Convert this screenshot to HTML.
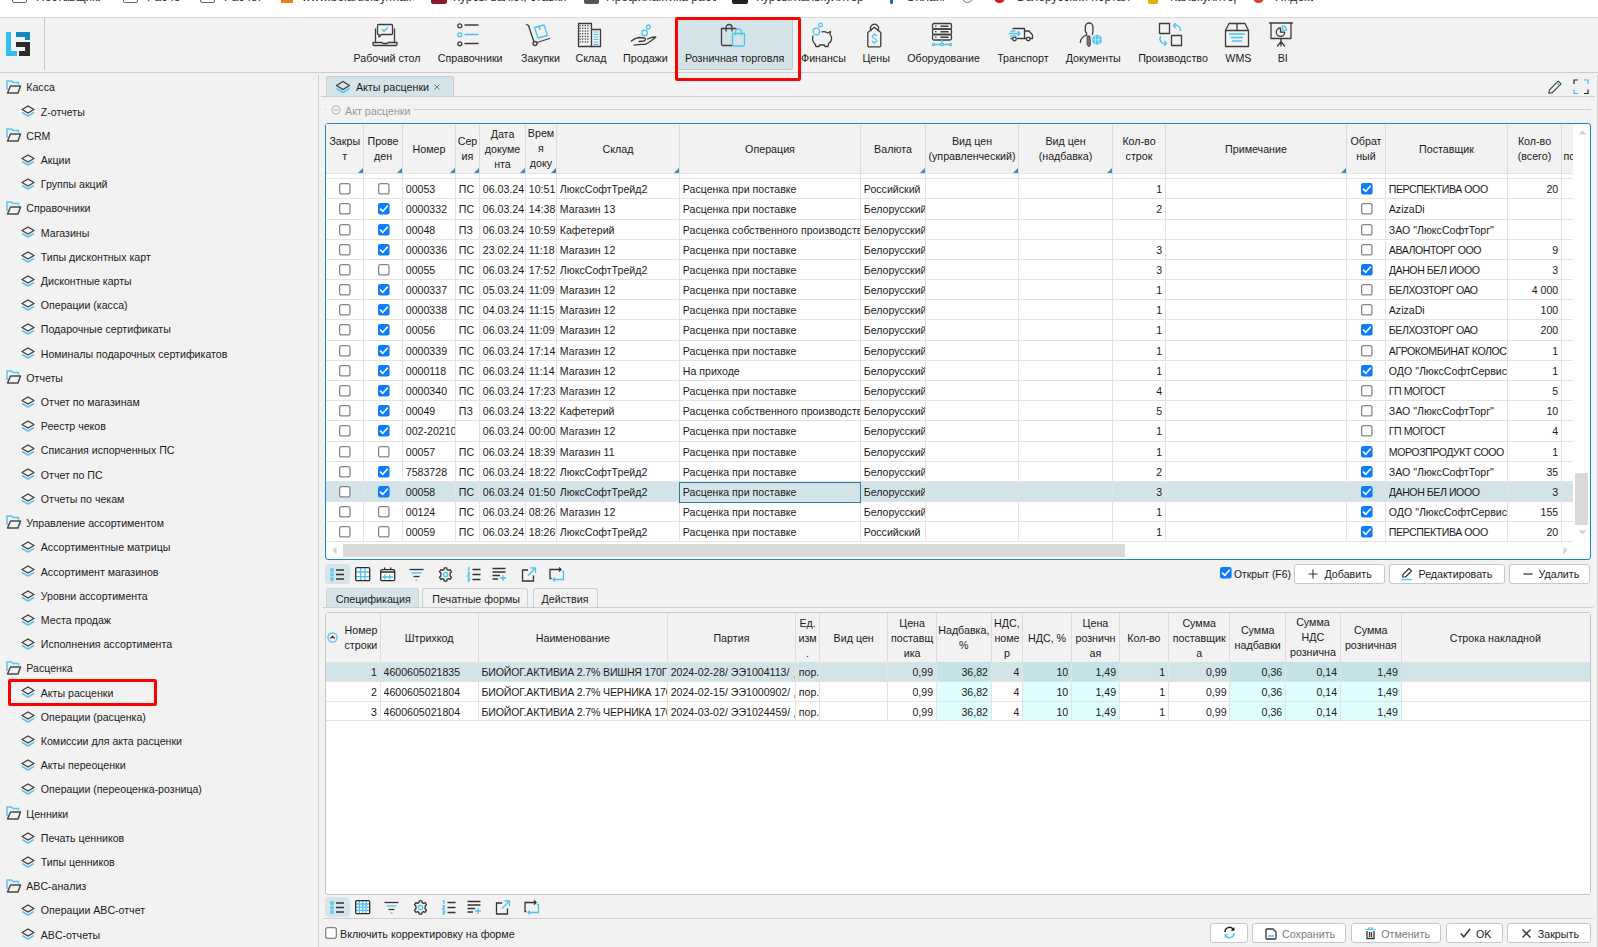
<!DOCTYPE html>
<html><head><meta charset="utf-8"><title>Акты расценки</title>
<style>
html,body{margin:0;padding:0;}
body{width:1598px;height:947px;overflow:hidden;position:relative;background:#f2f2f2;font-family:"Liberation Sans",sans-serif;font-size:10.6px;color:#1b1b1b;}
.t{position:absolute;white-space:nowrap;}
.b{position:absolute;box-sizing:border-box;}
svg.b{overflow:visible;}
</style></head><body>

<div class="b" style="left:0.00px;top:0.00px;width:1598.00px;height:17.00px;background:#ffffff;"></div>
<div class="b" style="left:0.00px;top:17.00px;width:1598.00px;height:1.00px;background:#dcdcdc;"></div>
<div class="b" style="left:0;top:0;width:1598px;height:17px;overflow:hidden;">
<div class="b" style="left:12px;top:-10px;width:15px;height:13px;border:1.5px solid #666;border-radius:2px;"></div>
<div class="t" style="left:36px;top:-10px;width:65px;overflow:hidden;font-size:12px;line-height:14px;color:#333;">Поставщики ЛС</div>
<div class="b" style="left:123px;top:-10px;width:15px;height:13px;border:1.5px solid #666;border-radius:2px;"></div>
<div class="t" style="left:147px;top:-10px;width:34px;overflow:hidden;font-size:12px;line-height:14px;color:#333;">Расчет</div>
<div class="b" style="left:200px;top:-10px;width:15px;height:13px;border:1.5px solid #666;border-radius:2px;"></div>
<div class="t" style="left:224px;top:-10px;width:38px;overflow:hidden;font-size:12px;line-height:14px;color:#333;">Расчеты</div>
<div class="b" style="left:281px;top:0px;width:12px;height:3px;background:#f07b16;"></div>
<div class="t" style="left:302px;top:-10px;width:112px;overflow:hidden;font-size:12px;line-height:14px;color:#333;">www.belarus.by/main</div>
<div class="b" style="left:431px;top:-10px;width:16px;height:14px;background:#8b1a2b;border-radius:2px;"></div>
<div class="t" style="left:453px;top:-10px;width:114px;overflow:hidden;font-size:12px;line-height:14px;color:#333;">Курсы валют, ставки</div>
<div class="b" style="left:584px;top:-10px;width:15px;height:14px;background:#555;border-radius:2px;"></div>
<div class="t" style="left:606px;top:-10px;width:110px;overflow:hidden;font-size:12px;line-height:14px;color:#333;">Профилактика рабо</div>
<div class="b" style="left:732px;top:-10px;width:16px;height:14px;background:#222;border-radius:2px;"></div>
<div class="t" style="left:756px;top:-10px;width:110px;overflow:hidden;font-size:12px;line-height:14px;color:#333;">Курсы/Калькулятор</div>
<div class="b" style="left:890px;top:-10px;width:3px;height:14px;background:#1565c0;border-radius:2px;"></div>
<div class="t" style="left:906px;top:-10px;width:38px;overflow:hidden;font-size:12px;line-height:14px;color:#333;">Онлайн</div>
<div class="b" style="left:962px;top:-8px;width:11px;height:11px;border-radius:50%;border:1.5px solid #777;"></div>
<div class="b" style="left:994px;top:-8px;width:11px;height:11px;border-radius:50%;background:#d81b1b;"></div>
<div class="t" style="left:1017px;top:-10px;width:113px;overflow:hidden;font-size:12px;line-height:14px;color:#333;">Белорусский портал</div>
<div class="b" style="left:1148px;top:-10px;width:10px;height:14px;background:#e0b000;border-radius:2px;"></div>
<div class="t" style="left:1170px;top:-10px;width:66px;overflow:hidden;font-size:12px;line-height:14px;color:#333;">Калькулятор</div>
<div class="b" style="left:1253px;top:-8px;width:11px;height:11px;border-radius:50%;background:#e53935;"></div>
<div class="t" style="left:1275px;top:-10px;width:38px;overflow:hidden;font-size:12px;line-height:14px;color:#333;">Яндекс</div>
</div>
<div class="b" style="left:0.00px;top:72.00px;width:1598.00px;height:1.20px;background:#cdcdcd;"></div>
<div class="b" style="left:44.00px;top:18.00px;width:1.00px;height:52.00px;background:#c9c9c9;"></div>
<svg class="b" style="left:6px;top:32px" width="25" height="24" viewBox="0 0 25 24">
<path d="M0 0H5V19H11V24H0Z" fill="#35bdf0"/>
<path d="M10 0H24V8H19V5H10Z" fill="#118ac0"/>
<path d="M10 10H24V24H13V19H19V15H10Z" fill="#2b2b2b"/>
</svg>
<div class="b" style="left:678.00px;top:20.00px;width:115.00px;height:50.00px;background:#d4e3e8;border-right:1px solid #c4c9cc;border-bottom:1px solid #c4c9cc;border-bottom-right-radius:3px;"></div>
<div class="t" style="left:327.00px;width:120px;text-align:center;top:50.00px;line-height:16px;font-size:10.7px;">Рабочий стол</div>
<div class="t" style="left:410.20px;width:120px;text-align:center;top:50.00px;line-height:16px;font-size:10.7px;">Справочники</div>
<div class="t" style="left:480.50px;width:120px;text-align:center;top:50.00px;line-height:16px;font-size:10.7px;">Закупки</div>
<div class="t" style="left:531.05px;width:120px;text-align:center;top:50.00px;line-height:16px;font-size:10.7px;">Склад</div>
<div class="t" style="left:585.40px;width:120px;text-align:center;top:50.00px;line-height:16px;font-size:10.7px;">Продажи</div>
<div class="t" style="left:674.70px;width:120px;text-align:center;top:50.00px;line-height:16px;font-size:10.7px;">Розничная торговля</div>
<div class="t" style="left:763.45px;width:120px;text-align:center;top:50.00px;line-height:16px;font-size:10.7px;">Финансы</div>
<div class="t" style="left:816.10px;width:120px;text-align:center;top:50.00px;line-height:16px;font-size:10.7px;">Цены</div>
<div class="t" style="left:883.60px;width:120px;text-align:center;top:50.00px;line-height:16px;font-size:10.7px;">Оборудование</div>
<div class="t" style="left:962.85px;width:120px;text-align:center;top:50.00px;line-height:16px;font-size:10.7px;">Транспорт</div>
<div class="t" style="left:1033.25px;width:120px;text-align:center;top:50.00px;line-height:16px;font-size:10.7px;">Документы</div>
<div class="t" style="left:1113.00px;width:120px;text-align:center;top:50.00px;line-height:16px;font-size:10.7px;">Производство</div>
<div class="t" style="left:1178.40px;width:120px;text-align:center;top:50.00px;line-height:16px;font-size:10.7px;">WMS</div>
<div class="t" style="left:1222.80px;width:120px;text-align:center;top:50.00px;line-height:16px;font-size:10.7px;">BI</div>
<svg class="b" style="left:372px;top:23px" width="26" height="24" viewBox="0 0 26 24" fill="none" stroke-width="1.3" stroke-linecap="round" stroke-linejoin="round">
<path d="M3.5 6V19.5M22.5 6V19.5" stroke="#3c3c3c"/>
<path d="M1 19.5H10L11 20.5H15L16 19.5H25V21.5A1 1 0 0 1 24 22.5H2A1 1 0 0 1 1 21.5Z" stroke="#3c3c3c"/>
<path d="M5.5 2.5A1 1 0 0 1 6.5 1.5H19.5A1 1 0 0 1 20.5 2.5V10.5A1 1 0 0 1 19.5 11.5H9.5L7 14V11.5H6.5A1 1 0 0 1 5.5 10.5Z" stroke="#3c3c3c"/>
<path d="M10 6.5L12 8.3L15.5 4.8" stroke="#4ec3ee"/>
</svg>
<svg class="b" style="left:456px;top:22px" width="26" height="26" viewBox="0 0 26 26" fill="none" stroke-width="1.3" stroke-linecap="round" stroke-linejoin="round">
<circle cx="3.8" cy="3.8" r="2" stroke="#3c3c3c"/><path d="M9 3H22" stroke="#3c3c3c"/>
<circle cx="3.8" cy="12.8" r="2" stroke="#4ec3ee"/><path d="M9 12.5H22" stroke="#4ec3ee"/>
<circle cx="3.8" cy="21.8" r="2" stroke="#3c3c3c"/><path d="M9 21.5H22" stroke="#3c3c3c"/>
</svg>
<svg class="b" style="left:525px;top:23px" width="27" height="24" viewBox="0 0 27 24" fill="none" stroke-width="1.3" stroke-linecap="round" stroke-linejoin="round">
<path d="M1.5 1.5L3.5 2.5L9 19" stroke="#3c3c3c"/><circle cx="10" cy="20.5" r="2" stroke="#3c3c3c"/>
<path d="M12 19.5L24.5 15.5" stroke="#3c3c3c"/>
<path d="M9.5 4.5L19 2L22.5 12.5L13 15Z" stroke="#4ec3ee"/><path d="M14 3.5L15 6.5" stroke="#4ec3ee"/>
</svg>
<svg class="b" style="left:577px;top:22px" width="25" height="26" viewBox="0 0 25 26" fill="none" stroke-width="1.3" stroke-linecap="round" stroke-linejoin="round">
<path d="M1.5 1.5H14.5V24.5H1.5Z" stroke="#3c3c3c"/><path d="M14.5 7.5H23.5V24.5H14.5" stroke="#3c3c3c"/>
<rect x="2.5" y="3.0" width="1.2" height="1.3" fill="#3c3c3c"/><rect x="5.1" y="3.0" width="1.2" height="1.3" fill="#3c3c3c"/><rect x="7.7" y="3.0" width="1.2" height="1.3" fill="#3c3c3c"/><rect x="10.3" y="3.0" width="1.2" height="1.3" fill="#3c3c3c"/><rect x="2.5" y="5.7" width="1.2" height="1.3" fill="#3c3c3c"/><rect x="5.1" y="5.7" width="1.2" height="1.3" fill="#3c3c3c"/><rect x="7.7" y="5.7" width="1.2" height="1.3" fill="#3c3c3c"/><rect x="10.3" y="5.7" width="1.2" height="1.3" fill="#3c3c3c"/><rect x="2.5" y="8.4" width="1.2" height="1.3" fill="#3c3c3c"/><rect x="5.1" y="8.4" width="1.2" height="1.3" fill="#3c3c3c"/><rect x="7.7" y="8.4" width="1.2" height="1.3" fill="#3c3c3c"/><rect x="10.3" y="8.4" width="1.2" height="1.3" fill="#3c3c3c"/><rect x="2.5" y="11.1" width="1.2" height="1.3" fill="#3c3c3c"/><rect x="5.1" y="11.1" width="1.2" height="1.3" fill="#3c3c3c"/><rect x="7.7" y="11.1" width="1.2" height="1.3" fill="#3c3c3c"/><rect x="10.3" y="11.1" width="1.2" height="1.3" fill="#3c3c3c"/><rect x="2.5" y="13.8" width="1.2" height="1.3" fill="#3c3c3c"/><rect x="5.1" y="13.8" width="1.2" height="1.3" fill="#3c3c3c"/><rect x="7.7" y="13.8" width="1.2" height="1.3" fill="#3c3c3c"/><rect x="10.3" y="13.8" width="1.2" height="1.3" fill="#3c3c3c"/><rect x="2.5" y="16.5" width="1.2" height="1.3" fill="#3c3c3c"/><rect x="5.1" y="16.5" width="1.2" height="1.3" fill="#3c3c3c"/><rect x="7.7" y="16.5" width="1.2" height="1.3" fill="#3c3c3c"/><rect x="10.3" y="16.5" width="1.2" height="1.3" fill="#3c3c3c"/><rect x="2.5" y="19.2" width="1.2" height="1.3" fill="#3c3c3c"/><rect x="5.1" y="19.2" width="1.2" height="1.3" fill="#3c3c3c"/><rect x="7.7" y="19.2" width="1.2" height="1.3" fill="#3c3c3c"/><rect x="10.3" y="19.2" width="1.2" height="1.3" fill="#3c3c3c"/>
<path d="M17 10H21M17 12.5H21M17 15H21M17 17.5H21M17 20H21M17 22.5H21" stroke="#4ec3ee" stroke-width="1.1"/>
</svg>
<svg class="b" style="left:630px;top:23px" width="27" height="24" viewBox="0 0 27 24" fill="none" stroke-width="1.3" stroke-linecap="round" stroke-linejoin="round">
<circle cx="14.6" cy="10" r="2.8" stroke="#4ec3ee"/><circle cx="18.3" cy="3.9" r="1.9" stroke="#4ec3ee"/>
<path d="M1.4 18C4 16 7 14.5 10 14.5L14 15C16 15.5 16 17.5 14 18L9 18.5" stroke="#3c3c3c"/>
<path d="M4.2 22.2C8 21.5 11 21.5 14.6 21.3C18 20.5 22 17 25.8 14.2C24 13.5 21 14.5 17.5 16" stroke="#3c3c3c"/>
</svg>
<svg class="b" style="left:720px;top:24px" width="27" height="25" viewBox="0 0 27 25" fill="none" stroke-width="1.3" stroke-linecap="round" stroke-linejoin="round">
<path d="M12 21.5H3A1.5 1.5 0 0 1 1.5 20V4.5H16" stroke="#3c3c3c"/>
<path d="M6 7V3.5A3 3 0 0 1 12 3.5V7" stroke="#3c3c3c"/>
<path d="M12.5 9.5H24.5V20.5A1.5 1.5 0 0 1 23 22H14A1.5 1.5 0 0 1 12.5 20.5Z" stroke="#4ec3ee"/>
<path d="M15.5 11V8A3 3 0 0 1 21.5 8V11" stroke="#4ec3ee"/>
</svg>
<svg class="b" style="left:811px;top:22px" width="23" height="26" viewBox="0 0 23 26" fill="none" stroke-width="1.3" stroke-linecap="round" stroke-linejoin="round">
<circle cx="5.3" cy="9.5" r="3.3" stroke="#4ec3ee"/><circle cx="9.5" cy="3" r="1.8" stroke="#4ec3ee"/>
<path d="M2 14C1 17 2 20 4 22L5 24.5H8L8.5 23H13.5L14 24.5H17L17.5 21.5C20 20 21 18 20.5 15L19 12.5L19.5 9.5L16.5 11C15 10 13 9.5 11 9.8" stroke="#3c3c3c"/>
</svg>
<svg class="b" style="left:866px;top:22px" width="17" height="26" viewBox="0 0 17 26" fill="none" stroke-width="1.3" stroke-linecap="round" stroke-linejoin="round">
<path d="M5.2 8.5A4 4 0 1 1 11.8 8.5" stroke="#3c3c3c"/>
<path d="M8.3 5.2L14.8 10.5V23.5A1.3 1.3 0 0 1 13.5 24.8H3.1A1.3 1.3 0 0 1 1.8 23.5V10.5Z" stroke="#3c3c3c"/>
<path d="M10.6 13.8C10 12.3 6.3 12.5 6.3 14.5C6.3 16.8 10.9 16.3 10.9 18.8C10.9 20.8 7 21 6.2 19.3M8.5 11.6V12.6M8.5 20.6V21.6" stroke="#4ec3ee" stroke-width="1.2"/>
</svg>
<svg class="b" style="left:931px;top:22px" width="23" height="26" viewBox="0 0 23 26" fill="none" stroke-width="1.3" stroke-linecap="round" stroke-linejoin="round">
<rect x="1.5" y="1.5" width="19" height="5.5" rx="1.5" stroke="#3c3c3c"/>
<rect x="1.5" y="7" width="19" height="5.5" rx="1.5" stroke="#3c3c3c"/>
<rect x="1.5" y="12.5" width="19" height="5.5" rx="1.5" stroke="#3c3c3c"/>
<path d="M10 4.2H17M10 9.7H17M10 15.2H17" stroke="#3c3c3c" stroke-width="1.5"/>
<path d="M4.5 4.2H5M4.5 9.7H5M4.5 15.2H5" stroke="#3c3c3c"/>
<path d="M11 18V22M3 22.5H19" stroke="#4ec3ee"/>
<circle cx="2.5" cy="22.5" r="1.2" stroke="#4ec3ee" fill="#f2f2f2"/><circle cx="11" cy="22.5" r="1.2" stroke="#4ec3ee" fill="#f2f2f2"/><circle cx="19.5" cy="22.5" r="1.2" stroke="#4ec3ee" fill="#f2f2f2"/>
</svg>
<svg class="b" style="left:1008px;top:27px" width="26" height="16" viewBox="0 0 26 16" fill="none" stroke-width="1.3" stroke-linecap="round" stroke-linejoin="round">
<path d="M5 1.5H16.5V11.5H9.5M3.5 11.5H3" stroke="#3c3c3c"/>
<path d="M16.5 4H21L24.5 8V11.5H22.5M16.5 11.5H18" stroke="#3c3c3c"/>
<circle cx="6.5" cy="12" r="1.8" stroke="#3c3c3c"/><circle cx="20.3" cy="12" r="1.8" stroke="#3c3c3c"/>
<path d="M1.5 6.5H12M10 4.5L12 6.5L10 8.5M3 4H7M3 9H8" stroke="#4ec3ee"/>
</svg>
<svg class="b" style="left:1078px;top:22px" width="25" height="26" viewBox="0 0 25 26" fill="none" stroke-width="1.3" stroke-linecap="round" stroke-linejoin="round">
<path d="M8.5 13V11C7.8 10.5 7.3 9.8 7.3 9V4.8A3.8 3.8 0 0 1 14.9 4.8V10C14.9 10.8 14.6 11.5 14.3 12.5" stroke="#3c3c3c"/>
<path d="M8.5 13C5 14.5 2.3 16 2.3 20.5" stroke="#3c3c3c"/>
<path d="M9.6 14H11.9L12.4 23L11 24.8L9.4 23Z" fill="#777" stroke="#3c3c3c" stroke-width="1"/>
<circle cx="19" cy="17.8" r="5" fill="#4ec3ee" stroke="none"/>
<path d="M15 17.8H23M17.3 13.5V22M20.7 13.5V22" stroke="#e8f7fd" stroke-width="0.7"/>
</svg>
<svg class="b" style="left:1158px;top:22px" width="26" height="26" viewBox="0 0 26 26" fill="none" stroke-width="1.3" stroke-linecap="round" stroke-linejoin="round">
<rect x="1.5" y="1.5" width="10" height="10" stroke="#3c3c3c"/>
<rect x="13.5" y="13.5" width="10" height="10" stroke="#3c3c3c"/>
<path d="M15.5 3.5A5 5 0 0 1 22.5 8.5M15.5 3.5L17.5 1.5M15.5 3.5L17.5 5.5" stroke="#4ec3ee"/>
<path d="M2.5 14.5A5 5 0 0 0 8.5 21.5M8.5 21.5L6.5 19.5M8.5 21.5L6.5 23.5" stroke="#4ec3ee"/>
</svg>
<svg class="b" style="left:1224px;top:22px" width="26" height="26" viewBox="0 0 26 26" fill="none" stroke-width="1.3" stroke-linecap="round" stroke-linejoin="round">
<path d="M1.5 8.5L5 1.5H21L24.5 8.5V24.5H1.5Z" stroke="#3c3c3c"/><path d="M1.5 8.5H24.5M13 1.5V8.5" stroke="#3c3c3c"/>
<path d="M5.5 12H20.5M7.5 15.5H18.5M8.5 19H17.5" stroke="#4ec3ee" stroke-width="1.4"/>
</svg>
<svg class="b" style="left:1268px;top:21px" width="26" height="27" viewBox="0 0 26 27" fill="none" stroke-width="1.3" stroke-linecap="round" stroke-linejoin="round">
<path d="M1.5 2H24.5M3 2V17.5H23V2" stroke="#3c3c3c"/>
<path d="M13 17.5V25M13 20.5L9.5 25M13 20.5L16.5 25" stroke="#3c3c3c"/>
<path d="M12.5 7A4.2 4.2 0 1 0 16.7 11.2H12.5Z" stroke="#3c3c3c"/>
<path d="M14.5 5A4.2 4.2 0 0 1 18.7 9.2H14.5Z" stroke="#4ec3ee"/>
</svg>
<div class="b" style="left:675.00px;top:17.00px;width:126.00px;height:64.00px;border:3px solid #ff0000;border-radius:2px;"></div>
<div class="b" style="left:318.00px;top:75.00px;width:1.00px;height:872.00px;background:#d0d0d0;"></div>
<svg class="b" style="left:6.00px;top:79.60px" width="16" height="14" viewBox="0 0 16 14"><path d="M1 10V1H5.5L7 2.5H12.5V4.5" fill="none" stroke="#5cc4ee" stroke-width="1.5" stroke-linejoin="round"/>
<path d="M4.5 6H14.5L12 13H1.5Z" fill="none" stroke="#4a4a4a" stroke-width="1.5" stroke-linejoin="round"/></svg>
<div class="t" style="left:26.30px;top:79.30px;line-height:16px;font-size:10.6px;color:#1b1b1b;">Касса</div>
<svg class="b" style="left:21.00px;top:105.31px" width="14" height="12" viewBox="0 0 14 12"><path d="M7 1L13 4.5L7 8L1 4.5Z" fill="none" stroke="#3c3c3c" stroke-width="1.3" stroke-linejoin="round"/>
<path d="M1 7.5L7 11L13 7.5" fill="none" stroke="#5cc4ee" stroke-width="1.6" stroke-linejoin="round"/></svg>
<div class="t" style="left:40.80px;top:103.51px;line-height:16px;font-size:10.6px;color:#1b1b1b;">Z-отчеты</div>
<svg class="b" style="left:6.00px;top:128.02px" width="16" height="14" viewBox="0 0 16 14"><path d="M1 10V1H5.5L7 2.5H12.5V4.5" fill="none" stroke="#5cc4ee" stroke-width="1.5" stroke-linejoin="round"/>
<path d="M4.5 6H14.5L12 13H1.5Z" fill="none" stroke="#4a4a4a" stroke-width="1.5" stroke-linejoin="round"/></svg>
<div class="t" style="left:26.30px;top:127.72px;line-height:16px;font-size:10.6px;color:#1b1b1b;">CRM</div>
<svg class="b" style="left:21.00px;top:153.73px" width="14" height="12" viewBox="0 0 14 12"><path d="M7 1L13 4.5L7 8L1 4.5Z" fill="none" stroke="#3c3c3c" stroke-width="1.3" stroke-linejoin="round"/>
<path d="M1 7.5L7 11L13 7.5" fill="none" stroke="#5cc4ee" stroke-width="1.6" stroke-linejoin="round"/></svg>
<div class="t" style="left:40.80px;top:151.93px;line-height:16px;font-size:10.6px;color:#1b1b1b;">Акции</div>
<svg class="b" style="left:21.00px;top:177.94px" width="14" height="12" viewBox="0 0 14 12"><path d="M7 1L13 4.5L7 8L1 4.5Z" fill="none" stroke="#3c3c3c" stroke-width="1.3" stroke-linejoin="round"/>
<path d="M1 7.5L7 11L13 7.5" fill="none" stroke="#5cc4ee" stroke-width="1.6" stroke-linejoin="round"/></svg>
<div class="t" style="left:40.80px;top:176.14px;line-height:16px;font-size:10.6px;color:#1b1b1b;">Группы акций</div>
<svg class="b" style="left:6.00px;top:200.65px" width="16" height="14" viewBox="0 0 16 14"><path d="M1 10V1H5.5L7 2.5H12.5V4.5" fill="none" stroke="#5cc4ee" stroke-width="1.5" stroke-linejoin="round"/>
<path d="M4.5 6H14.5L12 13H1.5Z" fill="none" stroke="#4a4a4a" stroke-width="1.5" stroke-linejoin="round"/></svg>
<div class="t" style="left:26.30px;top:200.35px;line-height:16px;font-size:10.6px;color:#1b1b1b;">Справочники</div>
<svg class="b" style="left:21.00px;top:226.36px" width="14" height="12" viewBox="0 0 14 12"><path d="M7 1L13 4.5L7 8L1 4.5Z" fill="none" stroke="#3c3c3c" stroke-width="1.3" stroke-linejoin="round"/>
<path d="M1 7.5L7 11L13 7.5" fill="none" stroke="#5cc4ee" stroke-width="1.6" stroke-linejoin="round"/></svg>
<div class="t" style="left:40.80px;top:224.56px;line-height:16px;font-size:10.6px;color:#1b1b1b;">Магазины</div>
<svg class="b" style="left:21.00px;top:250.57px" width="14" height="12" viewBox="0 0 14 12"><path d="M7 1L13 4.5L7 8L1 4.5Z" fill="none" stroke="#3c3c3c" stroke-width="1.3" stroke-linejoin="round"/>
<path d="M1 7.5L7 11L13 7.5" fill="none" stroke="#5cc4ee" stroke-width="1.6" stroke-linejoin="round"/></svg>
<div class="t" style="left:40.80px;top:248.77px;line-height:16px;font-size:10.6px;color:#1b1b1b;">Типы дисконтных карт</div>
<svg class="b" style="left:21.00px;top:274.78px" width="14" height="12" viewBox="0 0 14 12"><path d="M7 1L13 4.5L7 8L1 4.5Z" fill="none" stroke="#3c3c3c" stroke-width="1.3" stroke-linejoin="round"/>
<path d="M1 7.5L7 11L13 7.5" fill="none" stroke="#5cc4ee" stroke-width="1.6" stroke-linejoin="round"/></svg>
<div class="t" style="left:40.80px;top:272.98px;line-height:16px;font-size:10.6px;color:#1b1b1b;">Дисконтные карты</div>
<svg class="b" style="left:21.00px;top:298.99px" width="14" height="12" viewBox="0 0 14 12"><path d="M7 1L13 4.5L7 8L1 4.5Z" fill="none" stroke="#3c3c3c" stroke-width="1.3" stroke-linejoin="round"/>
<path d="M1 7.5L7 11L13 7.5" fill="none" stroke="#5cc4ee" stroke-width="1.6" stroke-linejoin="round"/></svg>
<div class="t" style="left:40.80px;top:297.19px;line-height:16px;font-size:10.6px;color:#1b1b1b;">Операции (касса)</div>
<svg class="b" style="left:21.00px;top:323.20px" width="14" height="12" viewBox="0 0 14 12"><path d="M7 1L13 4.5L7 8L1 4.5Z" fill="none" stroke="#3c3c3c" stroke-width="1.3" stroke-linejoin="round"/>
<path d="M1 7.5L7 11L13 7.5" fill="none" stroke="#5cc4ee" stroke-width="1.6" stroke-linejoin="round"/></svg>
<div class="t" style="left:40.80px;top:321.40px;line-height:16px;font-size:10.6px;color:#1b1b1b;">Подарочные сертификаты</div>
<svg class="b" style="left:21.00px;top:347.41px" width="14" height="12" viewBox="0 0 14 12"><path d="M7 1L13 4.5L7 8L1 4.5Z" fill="none" stroke="#3c3c3c" stroke-width="1.3" stroke-linejoin="round"/>
<path d="M1 7.5L7 11L13 7.5" fill="none" stroke="#5cc4ee" stroke-width="1.6" stroke-linejoin="round"/></svg>
<div class="t" style="left:40.80px;top:345.61px;line-height:16px;font-size:10.6px;color:#1b1b1b;">Номиналы подарочных сертификатов</div>
<svg class="b" style="left:6.00px;top:370.12px" width="16" height="14" viewBox="0 0 16 14"><path d="M1 10V1H5.5L7 2.5H12.5V4.5" fill="none" stroke="#5cc4ee" stroke-width="1.5" stroke-linejoin="round"/>
<path d="M4.5 6H14.5L12 13H1.5Z" fill="none" stroke="#4a4a4a" stroke-width="1.5" stroke-linejoin="round"/></svg>
<div class="t" style="left:26.30px;top:369.82px;line-height:16px;font-size:10.6px;color:#1b1b1b;">Отчеты</div>
<svg class="b" style="left:21.00px;top:395.83px" width="14" height="12" viewBox="0 0 14 12"><path d="M7 1L13 4.5L7 8L1 4.5Z" fill="none" stroke="#3c3c3c" stroke-width="1.3" stroke-linejoin="round"/>
<path d="M1 7.5L7 11L13 7.5" fill="none" stroke="#5cc4ee" stroke-width="1.6" stroke-linejoin="round"/></svg>
<div class="t" style="left:40.80px;top:394.03px;line-height:16px;font-size:10.6px;color:#1b1b1b;">Отчет по магазинам</div>
<svg class="b" style="left:21.00px;top:420.04px" width="14" height="12" viewBox="0 0 14 12"><path d="M7 1L13 4.5L7 8L1 4.5Z" fill="none" stroke="#3c3c3c" stroke-width="1.3" stroke-linejoin="round"/>
<path d="M1 7.5L7 11L13 7.5" fill="none" stroke="#5cc4ee" stroke-width="1.6" stroke-linejoin="round"/></svg>
<div class="t" style="left:40.80px;top:418.24px;line-height:16px;font-size:10.6px;color:#1b1b1b;">Реестр чеков</div>
<svg class="b" style="left:21.00px;top:444.25px" width="14" height="12" viewBox="0 0 14 12"><path d="M7 1L13 4.5L7 8L1 4.5Z" fill="none" stroke="#3c3c3c" stroke-width="1.3" stroke-linejoin="round"/>
<path d="M1 7.5L7 11L13 7.5" fill="none" stroke="#5cc4ee" stroke-width="1.6" stroke-linejoin="round"/></svg>
<div class="t" style="left:40.80px;top:442.45px;line-height:16px;font-size:10.6px;color:#1b1b1b;">Списания испорченных ПС</div>
<svg class="b" style="left:21.00px;top:468.46px" width="14" height="12" viewBox="0 0 14 12"><path d="M7 1L13 4.5L7 8L1 4.5Z" fill="none" stroke="#3c3c3c" stroke-width="1.3" stroke-linejoin="round"/>
<path d="M1 7.5L7 11L13 7.5" fill="none" stroke="#5cc4ee" stroke-width="1.6" stroke-linejoin="round"/></svg>
<div class="t" style="left:40.80px;top:466.66px;line-height:16px;font-size:10.6px;color:#1b1b1b;">Отчет по ПС</div>
<svg class="b" style="left:21.00px;top:492.67px" width="14" height="12" viewBox="0 0 14 12"><path d="M7 1L13 4.5L7 8L1 4.5Z" fill="none" stroke="#3c3c3c" stroke-width="1.3" stroke-linejoin="round"/>
<path d="M1 7.5L7 11L13 7.5" fill="none" stroke="#5cc4ee" stroke-width="1.6" stroke-linejoin="round"/></svg>
<div class="t" style="left:40.80px;top:490.87px;line-height:16px;font-size:10.6px;color:#1b1b1b;">Отчеты по чекам</div>
<svg class="b" style="left:6.00px;top:515.38px" width="16" height="14" viewBox="0 0 16 14"><path d="M1 10V1H5.5L7 2.5H12.5V4.5" fill="none" stroke="#5cc4ee" stroke-width="1.5" stroke-linejoin="round"/>
<path d="M4.5 6H14.5L12 13H1.5Z" fill="none" stroke="#4a4a4a" stroke-width="1.5" stroke-linejoin="round"/></svg>
<div class="t" style="left:26.30px;top:515.08px;line-height:16px;font-size:10.6px;color:#1b1b1b;">Управление ассортиментом</div>
<svg class="b" style="left:21.00px;top:541.09px" width="14" height="12" viewBox="0 0 14 12"><path d="M7 1L13 4.5L7 8L1 4.5Z" fill="none" stroke="#3c3c3c" stroke-width="1.3" stroke-linejoin="round"/>
<path d="M1 7.5L7 11L13 7.5" fill="none" stroke="#5cc4ee" stroke-width="1.6" stroke-linejoin="round"/></svg>
<div class="t" style="left:40.80px;top:539.29px;line-height:16px;font-size:10.6px;color:#1b1b1b;">Ассортиментные матрицы</div>
<svg class="b" style="left:21.00px;top:565.30px" width="14" height="12" viewBox="0 0 14 12"><path d="M7 1L13 4.5L7 8L1 4.5Z" fill="none" stroke="#3c3c3c" stroke-width="1.3" stroke-linejoin="round"/>
<path d="M1 7.5L7 11L13 7.5" fill="none" stroke="#5cc4ee" stroke-width="1.6" stroke-linejoin="round"/></svg>
<div class="t" style="left:40.80px;top:563.50px;line-height:16px;font-size:10.6px;color:#1b1b1b;">Ассортимент магазинов</div>
<svg class="b" style="left:21.00px;top:589.51px" width="14" height="12" viewBox="0 0 14 12"><path d="M7 1L13 4.5L7 8L1 4.5Z" fill="none" stroke="#3c3c3c" stroke-width="1.3" stroke-linejoin="round"/>
<path d="M1 7.5L7 11L13 7.5" fill="none" stroke="#5cc4ee" stroke-width="1.6" stroke-linejoin="round"/></svg>
<div class="t" style="left:40.80px;top:587.71px;line-height:16px;font-size:10.6px;color:#1b1b1b;">Уровни ассортимента</div>
<svg class="b" style="left:21.00px;top:613.72px" width="14" height="12" viewBox="0 0 14 12"><path d="M7 1L13 4.5L7 8L1 4.5Z" fill="none" stroke="#3c3c3c" stroke-width="1.3" stroke-linejoin="round"/>
<path d="M1 7.5L7 11L13 7.5" fill="none" stroke="#5cc4ee" stroke-width="1.6" stroke-linejoin="round"/></svg>
<div class="t" style="left:40.80px;top:611.92px;line-height:16px;font-size:10.6px;color:#1b1b1b;">Места продаж</div>
<svg class="b" style="left:21.00px;top:637.93px" width="14" height="12" viewBox="0 0 14 12"><path d="M7 1L13 4.5L7 8L1 4.5Z" fill="none" stroke="#3c3c3c" stroke-width="1.3" stroke-linejoin="round"/>
<path d="M1 7.5L7 11L13 7.5" fill="none" stroke="#5cc4ee" stroke-width="1.6" stroke-linejoin="round"/></svg>
<div class="t" style="left:40.80px;top:636.13px;line-height:16px;font-size:10.6px;color:#1b1b1b;">Исполнения ассортимента</div>
<svg class="b" style="left:6.00px;top:660.64px" width="16" height="14" viewBox="0 0 16 14"><path d="M1 10V1H5.5L7 2.5H12.5V4.5" fill="none" stroke="#5cc4ee" stroke-width="1.5" stroke-linejoin="round"/>
<path d="M4.5 6H14.5L12 13H1.5Z" fill="none" stroke="#4a4a4a" stroke-width="1.5" stroke-linejoin="round"/></svg>
<div class="t" style="left:26.30px;top:660.34px;line-height:16px;font-size:10.6px;color:#1b1b1b;">Расценка</div>
<svg class="b" style="left:21.00px;top:686.35px" width="14" height="12" viewBox="0 0 14 12"><path d="M7 1L13 4.5L7 8L1 4.5Z" fill="none" stroke="#3c3c3c" stroke-width="1.3" stroke-linejoin="round"/>
<path d="M1 7.5L7 11L13 7.5" fill="none" stroke="#5cc4ee" stroke-width="1.6" stroke-linejoin="round"/></svg>
<div class="t" style="left:40.80px;top:684.55px;line-height:16px;font-size:10.6px;color:#1b1b1b;">Акты расценки</div>
<svg class="b" style="left:21.00px;top:710.56px" width="14" height="12" viewBox="0 0 14 12"><path d="M7 1L13 4.5L7 8L1 4.5Z" fill="none" stroke="#3c3c3c" stroke-width="1.3" stroke-linejoin="round"/>
<path d="M1 7.5L7 11L13 7.5" fill="none" stroke="#5cc4ee" stroke-width="1.6" stroke-linejoin="round"/></svg>
<div class="t" style="left:40.80px;top:708.76px;line-height:16px;font-size:10.6px;color:#1b1b1b;">Операции (расценка)</div>
<svg class="b" style="left:21.00px;top:734.77px" width="14" height="12" viewBox="0 0 14 12"><path d="M7 1L13 4.5L7 8L1 4.5Z" fill="none" stroke="#3c3c3c" stroke-width="1.3" stroke-linejoin="round"/>
<path d="M1 7.5L7 11L13 7.5" fill="none" stroke="#5cc4ee" stroke-width="1.6" stroke-linejoin="round"/></svg>
<div class="t" style="left:40.80px;top:732.97px;line-height:16px;font-size:10.6px;color:#1b1b1b;">Комиссии для акта расценки</div>
<svg class="b" style="left:21.00px;top:758.98px" width="14" height="12" viewBox="0 0 14 12"><path d="M7 1L13 4.5L7 8L1 4.5Z" fill="none" stroke="#3c3c3c" stroke-width="1.3" stroke-linejoin="round"/>
<path d="M1 7.5L7 11L13 7.5" fill="none" stroke="#5cc4ee" stroke-width="1.6" stroke-linejoin="round"/></svg>
<div class="t" style="left:40.80px;top:757.18px;line-height:16px;font-size:10.6px;color:#1b1b1b;">Акты переоценки</div>
<svg class="b" style="left:21.00px;top:783.19px" width="14" height="12" viewBox="0 0 14 12"><path d="M7 1L13 4.5L7 8L1 4.5Z" fill="none" stroke="#3c3c3c" stroke-width="1.3" stroke-linejoin="round"/>
<path d="M1 7.5L7 11L13 7.5" fill="none" stroke="#5cc4ee" stroke-width="1.6" stroke-linejoin="round"/></svg>
<div class="t" style="left:40.80px;top:781.39px;line-height:16px;font-size:10.6px;color:#1b1b1b;">Операции (переоценка-розница)</div>
<svg class="b" style="left:6.00px;top:805.90px" width="16" height="14" viewBox="0 0 16 14"><path d="M1 10V1H5.5L7 2.5H12.5V4.5" fill="none" stroke="#5cc4ee" stroke-width="1.5" stroke-linejoin="round"/>
<path d="M4.5 6H14.5L12 13H1.5Z" fill="none" stroke="#4a4a4a" stroke-width="1.5" stroke-linejoin="round"/></svg>
<div class="t" style="left:26.30px;top:805.60px;line-height:16px;font-size:10.6px;color:#1b1b1b;">Ценники</div>
<svg class="b" style="left:21.00px;top:831.61px" width="14" height="12" viewBox="0 0 14 12"><path d="M7 1L13 4.5L7 8L1 4.5Z" fill="none" stroke="#3c3c3c" stroke-width="1.3" stroke-linejoin="round"/>
<path d="M1 7.5L7 11L13 7.5" fill="none" stroke="#5cc4ee" stroke-width="1.6" stroke-linejoin="round"/></svg>
<div class="t" style="left:40.80px;top:829.81px;line-height:16px;font-size:10.6px;color:#1b1b1b;">Печать ценников</div>
<svg class="b" style="left:21.00px;top:855.82px" width="14" height="12" viewBox="0 0 14 12"><path d="M7 1L13 4.5L7 8L1 4.5Z" fill="none" stroke="#3c3c3c" stroke-width="1.3" stroke-linejoin="round"/>
<path d="M1 7.5L7 11L13 7.5" fill="none" stroke="#5cc4ee" stroke-width="1.6" stroke-linejoin="round"/></svg>
<div class="t" style="left:40.80px;top:854.02px;line-height:16px;font-size:10.6px;color:#1b1b1b;">Типы ценников</div>
<svg class="b" style="left:6.00px;top:878.53px" width="16" height="14" viewBox="0 0 16 14"><path d="M1 10V1H5.5L7 2.5H12.5V4.5" fill="none" stroke="#5cc4ee" stroke-width="1.5" stroke-linejoin="round"/>
<path d="M4.5 6H14.5L12 13H1.5Z" fill="none" stroke="#4a4a4a" stroke-width="1.5" stroke-linejoin="round"/></svg>
<div class="t" style="left:26.30px;top:878.23px;line-height:16px;font-size:10.6px;color:#1b1b1b;">ABC-анализ</div>
<svg class="b" style="left:21.00px;top:904.24px" width="14" height="12" viewBox="0 0 14 12"><path d="M7 1L13 4.5L7 8L1 4.5Z" fill="none" stroke="#3c3c3c" stroke-width="1.3" stroke-linejoin="round"/>
<path d="M1 7.5L7 11L13 7.5" fill="none" stroke="#5cc4ee" stroke-width="1.6" stroke-linejoin="round"/></svg>
<div class="t" style="left:40.80px;top:902.44px;line-height:16px;font-size:10.6px;color:#1b1b1b;">Операции ABC-отчет</div>
<svg class="b" style="left:21.00px;top:928.45px" width="14" height="12" viewBox="0 0 14 12"><path d="M7 1L13 4.5L7 8L1 4.5Z" fill="none" stroke="#3c3c3c" stroke-width="1.3" stroke-linejoin="round"/>
<path d="M1 7.5L7 11L13 7.5" fill="none" stroke="#5cc4ee" stroke-width="1.6" stroke-linejoin="round"/></svg>
<div class="t" style="left:40.80px;top:926.65px;line-height:16px;font-size:10.6px;color:#1b1b1b;">ABC-отчеты</div>
<div class="b" style="left:8.00px;top:678.60px;width:149.00px;height:27.40px;border:3px solid #ff0000;border-radius:2px;"></div>
<div class="b" style="left:1597.00px;top:75.00px;width:1.00px;height:872.00px;background:#d0d0d0;"></div>
<div class="b" style="left:326.00px;top:76.00px;width:128.00px;height:21.00px;background:#d5e4e8;border:1px solid #c9cdcf;border-bottom:none;border-top-left-radius:3px;border-top-right-radius:3px;"></div>
<div class="b" style="left:321.00px;top:96.00px;width:1274.00px;height:1.20px;background:#cfcfcf;"></div>
<svg class="b" style="left:335.00px;top:80.00px" width="16" height="14" viewBox="0 0 16 14"><path d="M8 1.5L14.5 5.5L8 9.5L1.5 5.5Z" fill="none" stroke="#3c3c3c" stroke-width="1.3" stroke-linejoin="round"/>
<path d="M1.5 8.5L8 12.5L14.5 8.5" fill="none" stroke="#5cc4ee" stroke-width="1.7" stroke-linejoin="round"/></svg>
<div class="t" style="left:355.90px;top:78.80px;line-height:16px;font-size:10.7px;color:#1b1b1b;">Акты расценки</div>
<svg class="b" style="left:433.50px;top:84.00px" width="6" height="6" viewBox="0 0 6 6"><path d="M0.5 0.5L5.5 5.5M5.5 0.5L0.5 5.5" stroke="#666" stroke-width="0.9"/></svg>
<svg class="b" style="left:1547.00px;top:79.00px" width="16" height="16" viewBox="0 0 16 16"><path d="M1.8 14.2L2.5 10.8L11.2 2.1L14 4.9L5.3 13.6Z" fill="none" stroke="#3c3c3c" stroke-width="1.1" stroke-linejoin="round"/>
<path d="M9.6 3.7L12.4 6.5" stroke="#4ec3ee" stroke-width="1.2"/></svg>
<svg class="b" style="left:1573.00px;top:79.00px" width="16" height="16" viewBox="0 0 16 16"><path d="M1 5V1H5" fill="none" stroke="#2b2b2b" stroke-width="1.2"/>
<path d="M11 1H15V5" fill="none" stroke="#35bdf0" stroke-width="1.2"/>
<path d="M1 10.5V14.5H5" fill="none" stroke="#35bdf0" stroke-width="1.2"/>
<path d="M11 14.5H15V10.5" fill="none" stroke="#2b2b2b" stroke-width="1.2"/></svg>
<div class="b" style="left:325.00px;top:109.00px;width:1.20px;height:1.20px;background:#bdbdbd;"></div>
<svg class="b" style="left:330.50px;top:104.50px" width="10" height="10" viewBox="0 0 10 10"><circle cx="5" cy="5" r="4" fill="none" stroke="#b5b5b5" stroke-width="1.1"/><path d="M2.8 5H7.2" stroke="#b5b5b5" stroke-width="1.1"/></svg>
<div class="t" style="left:345.00px;top:103.20px;line-height:16px;font-size:10.7px;color:#9a9a9a;">Акт расценки</div>
<div class="b" style="left:413.00px;top:109.00px;width:1178.00px;height:1.20px;background:#d3d3d3;"></div>
<div class="b" style="left:325.00px;top:123.00px;width:1265.50px;height:436.50px;background:#fff;border:1px solid #168bbf;border-radius:3px;"></div>
<div class="b" style="left:326.00px;top:124.00px;width:1247.00px;height:49.30px;background:#f2f2f2;"></div>
<div class="b" style="left:326.00px;top:173.30px;width:1247.00px;height:1.00px;background:#e3e3e3;"></div>
<div class="b" style="left:326.00px;top:178.00px;width:1247.00px;height:1.00px;background:#e3e3e3;"></div>
<div class="b" style="left:326px;top:124px;width:1247px;height:435px;overflow:hidden;">
<div class="t" style="left:-20.00px;top:9.10px;line-height:16px;font-size:10.7px;color:#1b1b1b;width:77.50px;text-align:center;overflow:hidden;">Закры</div>
<div class="t" style="left:-20.00px;top:24.10px;line-height:16px;font-size:10.7px;color:#1b1b1b;width:77.50px;text-align:center;overflow:hidden;">т</div>
<div class="b" style="left:37.00px;top:0.00px;width:1.00px;height:49.30px;background:#dcdcdc;"></div>
<svg class="b" style="left:31.50px;top:43.80px" width="5" height="5" viewBox="0 0 5 5"><path d="M5 0V5H0Z" fill="#2d8fc4"/></svg>
<div class="t" style="left:17.50px;top:9.10px;line-height:16px;font-size:10.7px;color:#1b1b1b;width:79.00px;text-align:center;overflow:hidden;">Прове</div>
<div class="t" style="left:17.50px;top:24.10px;line-height:16px;font-size:10.7px;color:#1b1b1b;width:79.00px;text-align:center;overflow:hidden;">ден</div>
<div class="b" style="left:76.00px;top:0.00px;width:1.00px;height:49.30px;background:#dcdcdc;"></div>
<svg class="b" style="left:70.50px;top:43.80px" width="5" height="5" viewBox="0 0 5 5"><path d="M5 0V5H0Z" fill="#2d8fc4"/></svg>
<div class="t" style="left:56.50px;top:16.60px;line-height:16px;font-size:10.7px;color:#1b1b1b;width:93.00px;text-align:center;overflow:hidden;">Номер</div>
<div class="b" style="left:129.00px;top:0.00px;width:1.00px;height:49.30px;background:#dcdcdc;"></div>
<svg class="b" style="left:123.50px;top:43.80px" width="5" height="5" viewBox="0 0 5 5"><path d="M5 0V5H0Z" fill="#2d8fc4"/></svg>
<div class="t" style="left:109.50px;top:9.10px;line-height:16px;font-size:10.7px;color:#1b1b1b;width:64.00px;text-align:center;overflow:hidden;">Сер</div>
<div class="t" style="left:109.50px;top:24.10px;line-height:16px;font-size:10.7px;color:#1b1b1b;width:64.00px;text-align:center;overflow:hidden;">ия</div>
<div class="b" style="left:153.00px;top:0.00px;width:1.00px;height:49.30px;background:#dcdcdc;"></div>
<svg class="b" style="left:147.50px;top:43.80px" width="5" height="5" viewBox="0 0 5 5"><path d="M5 0V5H0Z" fill="#2d8fc4"/></svg>
<div class="t" style="left:133.50px;top:1.60px;line-height:16px;font-size:10.7px;color:#1b1b1b;width:86.00px;text-align:center;overflow:hidden;">Дата</div>
<div class="t" style="left:133.50px;top:16.60px;line-height:16px;font-size:10.7px;color:#1b1b1b;width:86.00px;text-align:center;overflow:hidden;">докуме</div>
<div class="t" style="left:133.50px;top:31.60px;line-height:16px;font-size:10.7px;color:#1b1b1b;width:86.00px;text-align:center;overflow:hidden;">нта</div>
<div class="b" style="left:199.00px;top:0.00px;width:1.00px;height:49.30px;background:#dcdcdc;"></div>
<svg class="b" style="left:193.50px;top:43.80px" width="5" height="5" viewBox="0 0 5 5"><path d="M5 0V5H0Z" fill="#2d8fc4"/></svg>
<div class="t" style="left:179.50px;top:0.50px;line-height:16px;font-size:10.7px;color:#1b1b1b;width:71.00px;text-align:center;overflow:hidden;">Врем</div>
<div class="t" style="left:179.50px;top:15.50px;line-height:16px;font-size:10.7px;color:#1b1b1b;width:71.00px;text-align:center;overflow:hidden;">я</div>
<div class="t" style="left:179.50px;top:30.50px;line-height:16px;font-size:10.7px;color:#1b1b1b;width:71.00px;text-align:center;overflow:hidden;">доку</div>
<div class="b" style="left:230.00px;top:0.00px;width:1.00px;height:49.30px;background:#dcdcdc;"></div>
<svg class="b" style="left:224.50px;top:43.80px" width="5" height="5" viewBox="0 0 5 5"><path d="M5 0V5H0Z" fill="#2d8fc4"/></svg>
<div class="t" style="left:210.50px;top:16.60px;line-height:16px;font-size:10.7px;color:#1b1b1b;width:163.00px;text-align:center;overflow:hidden;">Склад</div>
<div class="b" style="left:353.00px;top:0.00px;width:1.00px;height:49.30px;background:#dcdcdc;"></div>
<svg class="b" style="left:347.50px;top:43.80px" width="5" height="5" viewBox="0 0 5 5"><path d="M5 0V5H0Z" fill="#2d8fc4"/></svg>
<div class="t" style="left:333.50px;top:16.60px;line-height:16px;font-size:10.7px;color:#1b1b1b;width:221.00px;text-align:center;overflow:hidden;">Операция</div>
<div class="b" style="left:534.00px;top:0.00px;width:1.00px;height:49.30px;background:#dcdcdc;"></div>
<div class="t" style="left:514.50px;top:16.60px;line-height:16px;font-size:10.7px;color:#1b1b1b;width:105.00px;text-align:center;overflow:hidden;">Валюта</div>
<div class="b" style="left:599.00px;top:0.00px;width:1.00px;height:49.30px;background:#dcdcdc;"></div>
<svg class="b" style="left:593.50px;top:43.80px" width="5" height="5" viewBox="0 0 5 5"><path d="M5 0V5H0Z" fill="#2d8fc4"/></svg>
<div class="t" style="left:579.50px;top:9.10px;line-height:16px;font-size:10.7px;color:#1b1b1b;width:133.00px;text-align:center;overflow:hidden;">Вид цен</div>
<div class="t" style="left:579.50px;top:24.10px;line-height:16px;font-size:10.7px;color:#1b1b1b;width:133.00px;text-align:center;overflow:hidden;">(управленческий)</div>
<div class="b" style="left:692.00px;top:0.00px;width:1.00px;height:49.30px;background:#dcdcdc;"></div>
<svg class="b" style="left:686.50px;top:43.80px" width="5" height="5" viewBox="0 0 5 5"><path d="M5 0V5H0Z" fill="#2d8fc4"/></svg>
<div class="t" style="left:672.50px;top:9.10px;line-height:16px;font-size:10.7px;color:#1b1b1b;width:134.00px;text-align:center;overflow:hidden;">Вид цен</div>
<div class="t" style="left:672.50px;top:24.10px;line-height:16px;font-size:10.7px;color:#1b1b1b;width:134.00px;text-align:center;overflow:hidden;">(надбавка)</div>
<div class="b" style="left:786.00px;top:0.00px;width:1.00px;height:49.30px;background:#dcdcdc;"></div>
<svg class="b" style="left:780.50px;top:43.80px" width="5" height="5" viewBox="0 0 5 5"><path d="M5 0V5H0Z" fill="#2d8fc4"/></svg>
<div class="t" style="left:766.50px;top:9.10px;line-height:16px;font-size:10.7px;color:#1b1b1b;width:93.00px;text-align:center;overflow:hidden;">Кол-во</div>
<div class="t" style="left:766.50px;top:24.10px;line-height:16px;font-size:10.7px;color:#1b1b1b;width:93.00px;text-align:center;overflow:hidden;">строк</div>
<div class="b" style="left:839.00px;top:0.00px;width:1.00px;height:49.30px;background:#dcdcdc;"></div>
<div class="t" style="left:819.50px;top:16.60px;line-height:16px;font-size:10.7px;color:#1b1b1b;width:221.00px;text-align:center;overflow:hidden;">Примечание</div>
<div class="b" style="left:1020.00px;top:0.00px;width:1.00px;height:49.30px;background:#dcdcdc;"></div>
<svg class="b" style="left:1014.50px;top:43.80px" width="5" height="5" viewBox="0 0 5 5"><path d="M5 0V5H0Z" fill="#2d8fc4"/></svg>
<div class="t" style="left:1000.50px;top:9.10px;line-height:16px;font-size:10.7px;color:#1b1b1b;width:79.00px;text-align:center;overflow:hidden;">Обрат</div>
<div class="t" style="left:1000.50px;top:24.10px;line-height:16px;font-size:10.7px;color:#1b1b1b;width:79.00px;text-align:center;overflow:hidden;">ный</div>
<div class="b" style="left:1059.00px;top:0.00px;width:1.00px;height:49.30px;background:#dcdcdc;"></div>
<div class="t" style="left:1039.50px;top:16.60px;line-height:16px;font-size:10.7px;color:#1b1b1b;width:162.00px;text-align:center;overflow:hidden;">Поставщик</div>
<div class="b" style="left:1181.00px;top:0.00px;width:1.00px;height:49.30px;background:#dcdcdc;"></div>
<div class="t" style="left:1161.50px;top:9.10px;line-height:16px;font-size:10.7px;color:#1b1b1b;width:94.00px;text-align:center;overflow:hidden;">Кол-во</div>
<div class="t" style="left:1161.50px;top:24.10px;line-height:16px;font-size:10.7px;color:#1b1b1b;width:94.00px;text-align:center;overflow:hidden;">(всего)</div>
<div class="b" style="left:1235.00px;top:0.00px;width:1.00px;height:49.30px;background:#dcdcdc;"></div>
<div class="t" style="left:1237.50px;top:24.10px;line-height:16px;font-size:10.7px;color:#1b1b1b;">по</div>
<div class="b" style="left:0.00px;top:74.00px;width:1247.00px;height:1.00px;background:#e3e3e3;"></div>
<svg class="b" style="left:13.10px;top:58.50px" width="11.6" height="11.6" viewBox="0 0 12 12"><rect x="0.65" y="0.65" width="10.7" height="10.7" rx="2" fill="#fff" stroke="#858585" stroke-width="1.3"/></svg>
<svg class="b" style="left:52.10px;top:58.50px" width="11.6" height="11.6" viewBox="0 0 12 12"><rect x="0.65" y="0.65" width="10.7" height="10.7" rx="2" fill="#fff" stroke="#858585" stroke-width="1.3"/></svg>
<svg class="b" style="left:1035.10px;top:58.50px" width="11.6" height="11.6" viewBox="0 0 12 12"><rect x="0" y="0" width="12" height="12" rx="2.2" fill="#0b7bff"/><path d="M2.6 6.3L5 8.6L9.6 3.3" fill="none" stroke="#fff" stroke-width="1.7" stroke-linecap="round" stroke-linejoin="round"/></svg>
<div class="t" style="left:79.80px;top:57.05px;line-height:16px;font-size:10.6px;color:#1b1b1b;width:49.20px;text-align:left;overflow:hidden;">00053</div>
<div class="t" style="left:132.80px;top:57.05px;line-height:16px;font-size:10.6px;color:#1b1b1b;width:20.20px;text-align:left;overflow:hidden;">ПС</div>
<div class="t" style="left:156.80px;top:57.05px;line-height:16px;font-size:10.6px;color:#1b1b1b;width:42.20px;text-align:left;overflow:hidden;">06.03.24</div>
<div class="t" style="left:202.80px;top:57.05px;line-height:16px;font-size:10.6px;color:#1b1b1b;width:27.20px;text-align:left;overflow:hidden;">10:51</div>
<div class="t" style="left:233.80px;top:57.05px;line-height:16px;font-size:10.6px;color:#1b1b1b;width:119.20px;text-align:left;overflow:hidden;">ЛюксСофтТрейд2</div>
<div class="t" style="left:356.80px;top:57.05px;line-height:16px;font-size:10.6px;color:#1b1b1b;width:177.20px;text-align:left;overflow:hidden;">Расценка при поставке</div>
<div class="t" style="left:537.80px;top:57.05px;line-height:16px;font-size:10.6px;color:#1b1b1b;width:61.20px;text-align:left;overflow:hidden;">Российский</div>
<div class="t" style="left:786.50px;top:57.05px;line-height:16px;font-size:10.6px;color:#1b1b1b;width:49.70px;text-align:right;overflow:hidden;">1</div>
<div class="t" style="left:1062.80px;top:57.05px;line-height:16px;font-size:10.6px;color:#1b1b1b;width:118.20px;text-align:left;overflow:hidden;letter-spacing:-0.45px;">ПЕРСПЕКТИВА ООО</div>
<div class="t" style="left:1181.50px;top:57.05px;line-height:16px;font-size:10.6px;color:#1b1b1b;width:50.70px;text-align:right;overflow:hidden;">20</div>
<div class="b" style="left:0.00px;top:95.00px;width:1247.00px;height:1.00px;background:#e3e3e3;"></div>
<svg class="b" style="left:13.10px;top:78.50px" width="11.6" height="11.6" viewBox="0 0 12 12"><rect x="0.65" y="0.65" width="10.7" height="10.7" rx="2" fill="#fff" stroke="#858585" stroke-width="1.3"/></svg>
<svg class="b" style="left:52.10px;top:78.50px" width="11.6" height="11.6" viewBox="0 0 12 12"><rect x="0" y="0" width="12" height="12" rx="2.2" fill="#0b7bff"/><path d="M2.6 6.3L5 8.6L9.6 3.3" fill="none" stroke="#fff" stroke-width="1.7" stroke-linecap="round" stroke-linejoin="round"/></svg>
<svg class="b" style="left:1035.10px;top:78.50px" width="11.6" height="11.6" viewBox="0 0 12 12"><rect x="0.65" y="0.65" width="10.7" height="10.7" rx="2" fill="#fff" stroke="#858585" stroke-width="1.3"/></svg>
<div class="t" style="left:79.80px;top:77.05px;line-height:16px;font-size:10.6px;color:#1b1b1b;width:49.20px;text-align:left;overflow:hidden;">0000332</div>
<div class="t" style="left:132.80px;top:77.05px;line-height:16px;font-size:10.6px;color:#1b1b1b;width:20.20px;text-align:left;overflow:hidden;">ПС</div>
<div class="t" style="left:156.80px;top:77.05px;line-height:16px;font-size:10.6px;color:#1b1b1b;width:42.20px;text-align:left;overflow:hidden;">06.03.24</div>
<div class="t" style="left:202.80px;top:77.05px;line-height:16px;font-size:10.6px;color:#1b1b1b;width:27.20px;text-align:left;overflow:hidden;">14:38</div>
<div class="t" style="left:233.80px;top:77.05px;line-height:16px;font-size:10.6px;color:#1b1b1b;width:119.20px;text-align:left;overflow:hidden;">Магазин 13</div>
<div class="t" style="left:356.80px;top:77.05px;line-height:16px;font-size:10.6px;color:#1b1b1b;width:177.20px;text-align:left;overflow:hidden;">Расценка при поставке</div>
<div class="t" style="left:537.80px;top:77.05px;line-height:16px;font-size:10.6px;color:#1b1b1b;width:61.20px;text-align:left;overflow:hidden;">Белорусский</div>
<div class="t" style="left:786.50px;top:77.05px;line-height:16px;font-size:10.6px;color:#1b1b1b;width:49.70px;text-align:right;overflow:hidden;">2</div>
<div class="t" style="left:1062.80px;top:77.05px;line-height:16px;font-size:10.6px;color:#1b1b1b;width:118.20px;text-align:left;overflow:hidden;">AzizaDi</div>
<div class="b" style="left:0.00px;top:115.00px;width:1247.00px;height:1.00px;background:#e3e3e3;"></div>
<svg class="b" style="left:13.10px;top:99.50px" width="11.6" height="11.6" viewBox="0 0 12 12"><rect x="0.65" y="0.65" width="10.7" height="10.7" rx="2" fill="#fff" stroke="#858585" stroke-width="1.3"/></svg>
<svg class="b" style="left:52.10px;top:99.50px" width="11.6" height="11.6" viewBox="0 0 12 12"><rect x="0" y="0" width="12" height="12" rx="2.2" fill="#0b7bff"/><path d="M2.6 6.3L5 8.6L9.6 3.3" fill="none" stroke="#fff" stroke-width="1.7" stroke-linecap="round" stroke-linejoin="round"/></svg>
<svg class="b" style="left:1035.10px;top:99.50px" width="11.6" height="11.6" viewBox="0 0 12 12"><rect x="0.65" y="0.65" width="10.7" height="10.7" rx="2" fill="#fff" stroke="#858585" stroke-width="1.3"/></svg>
<div class="t" style="left:79.80px;top:98.05px;line-height:16px;font-size:10.6px;color:#1b1b1b;width:49.20px;text-align:left;overflow:hidden;">00048</div>
<div class="t" style="left:132.80px;top:98.05px;line-height:16px;font-size:10.6px;color:#1b1b1b;width:20.20px;text-align:left;overflow:hidden;">ПЗ</div>
<div class="t" style="left:156.80px;top:98.05px;line-height:16px;font-size:10.6px;color:#1b1b1b;width:42.20px;text-align:left;overflow:hidden;">06.03.24</div>
<div class="t" style="left:202.80px;top:98.05px;line-height:16px;font-size:10.6px;color:#1b1b1b;width:27.20px;text-align:left;overflow:hidden;">10:59</div>
<div class="t" style="left:233.80px;top:98.05px;line-height:16px;font-size:10.6px;color:#1b1b1b;width:119.20px;text-align:left;overflow:hidden;">Кафетерий</div>
<div class="t" style="left:356.80px;top:98.05px;line-height:16px;font-size:10.6px;color:#1b1b1b;width:177.20px;text-align:left;overflow:hidden;">Расценка собственного производства</div>
<div class="t" style="left:537.80px;top:98.05px;line-height:16px;font-size:10.6px;color:#1b1b1b;width:61.20px;text-align:left;overflow:hidden;">Белорусский</div>
<div class="t" style="left:1062.80px;top:98.05px;line-height:16px;font-size:10.6px;color:#1b1b1b;width:118.20px;text-align:left;overflow:hidden;">ЗАО "ЛюксСофтТорг"</div>
<div class="b" style="left:0.00px;top:135.00px;width:1247.00px;height:1.00px;background:#e3e3e3;"></div>
<svg class="b" style="left:13.10px;top:119.50px" width="11.6" height="11.6" viewBox="0 0 12 12"><rect x="0.65" y="0.65" width="10.7" height="10.7" rx="2" fill="#fff" stroke="#858585" stroke-width="1.3"/></svg>
<svg class="b" style="left:52.10px;top:119.50px" width="11.6" height="11.6" viewBox="0 0 12 12"><rect x="0" y="0" width="12" height="12" rx="2.2" fill="#0b7bff"/><path d="M2.6 6.3L5 8.6L9.6 3.3" fill="none" stroke="#fff" stroke-width="1.7" stroke-linecap="round" stroke-linejoin="round"/></svg>
<svg class="b" style="left:1035.10px;top:119.50px" width="11.6" height="11.6" viewBox="0 0 12 12"><rect x="0.65" y="0.65" width="10.7" height="10.7" rx="2" fill="#fff" stroke="#858585" stroke-width="1.3"/></svg>
<div class="t" style="left:79.80px;top:118.05px;line-height:16px;font-size:10.6px;color:#1b1b1b;width:49.20px;text-align:left;overflow:hidden;">0000336</div>
<div class="t" style="left:132.80px;top:118.05px;line-height:16px;font-size:10.6px;color:#1b1b1b;width:20.20px;text-align:left;overflow:hidden;">ПС</div>
<div class="t" style="left:156.80px;top:118.05px;line-height:16px;font-size:10.6px;color:#1b1b1b;width:42.20px;text-align:left;overflow:hidden;">23.02.24</div>
<div class="t" style="left:202.80px;top:118.05px;line-height:16px;font-size:10.6px;color:#1b1b1b;width:27.20px;text-align:left;overflow:hidden;">11:18</div>
<div class="t" style="left:233.80px;top:118.05px;line-height:16px;font-size:10.6px;color:#1b1b1b;width:119.20px;text-align:left;overflow:hidden;">Магазин 12</div>
<div class="t" style="left:356.80px;top:118.05px;line-height:16px;font-size:10.6px;color:#1b1b1b;width:177.20px;text-align:left;overflow:hidden;">Расценка при поставке</div>
<div class="t" style="left:537.80px;top:118.05px;line-height:16px;font-size:10.6px;color:#1b1b1b;width:61.20px;text-align:left;overflow:hidden;">Белорусский</div>
<div class="t" style="left:786.50px;top:118.05px;line-height:16px;font-size:10.6px;color:#1b1b1b;width:49.70px;text-align:right;overflow:hidden;">3</div>
<div class="t" style="left:1062.80px;top:118.05px;line-height:16px;font-size:10.6px;color:#1b1b1b;width:118.20px;text-align:left;overflow:hidden;letter-spacing:-0.45px;">АВАЛОНТОРГ ООО</div>
<div class="t" style="left:1181.50px;top:118.05px;line-height:16px;font-size:10.6px;color:#1b1b1b;width:50.70px;text-align:right;overflow:hidden;">9</div>
<div class="b" style="left:0.00px;top:155.00px;width:1247.00px;height:1.00px;background:#e3e3e3;"></div>
<svg class="b" style="left:13.10px;top:139.50px" width="11.6" height="11.6" viewBox="0 0 12 12"><rect x="0.65" y="0.65" width="10.7" height="10.7" rx="2" fill="#fff" stroke="#858585" stroke-width="1.3"/></svg>
<svg class="b" style="left:52.10px;top:139.50px" width="11.6" height="11.6" viewBox="0 0 12 12"><rect x="0.65" y="0.65" width="10.7" height="10.7" rx="2" fill="#fff" stroke="#858585" stroke-width="1.3"/></svg>
<svg class="b" style="left:1035.10px;top:139.50px" width="11.6" height="11.6" viewBox="0 0 12 12"><rect x="0" y="0" width="12" height="12" rx="2.2" fill="#0b7bff"/><path d="M2.6 6.3L5 8.6L9.6 3.3" fill="none" stroke="#fff" stroke-width="1.7" stroke-linecap="round" stroke-linejoin="round"/></svg>
<div class="t" style="left:79.80px;top:138.05px;line-height:16px;font-size:10.6px;color:#1b1b1b;width:49.20px;text-align:left;overflow:hidden;">00055</div>
<div class="t" style="left:132.80px;top:138.05px;line-height:16px;font-size:10.6px;color:#1b1b1b;width:20.20px;text-align:left;overflow:hidden;">ПС</div>
<div class="t" style="left:156.80px;top:138.05px;line-height:16px;font-size:10.6px;color:#1b1b1b;width:42.20px;text-align:left;overflow:hidden;">06.03.24</div>
<div class="t" style="left:202.80px;top:138.05px;line-height:16px;font-size:10.6px;color:#1b1b1b;width:27.20px;text-align:left;overflow:hidden;">17:52</div>
<div class="t" style="left:233.80px;top:138.05px;line-height:16px;font-size:10.6px;color:#1b1b1b;width:119.20px;text-align:left;overflow:hidden;">ЛюксСофтТрейд2</div>
<div class="t" style="left:356.80px;top:138.05px;line-height:16px;font-size:10.6px;color:#1b1b1b;width:177.20px;text-align:left;overflow:hidden;">Расценка при поставке</div>
<div class="t" style="left:537.80px;top:138.05px;line-height:16px;font-size:10.6px;color:#1b1b1b;width:61.20px;text-align:left;overflow:hidden;">Белорусский</div>
<div class="t" style="left:786.50px;top:138.05px;line-height:16px;font-size:10.6px;color:#1b1b1b;width:49.70px;text-align:right;overflow:hidden;">3</div>
<div class="t" style="left:1062.80px;top:138.05px;line-height:16px;font-size:10.6px;color:#1b1b1b;width:118.20px;text-align:left;overflow:hidden;letter-spacing:-0.45px;">ДАНОН БЕЛ ИООО</div>
<div class="t" style="left:1181.50px;top:138.05px;line-height:16px;font-size:10.6px;color:#1b1b1b;width:50.70px;text-align:right;overflow:hidden;">3</div>
<div class="b" style="left:0.00px;top:175.00px;width:1247.00px;height:1.00px;background:#e3e3e3;"></div>
<svg class="b" style="left:13.10px;top:159.50px" width="11.6" height="11.6" viewBox="0 0 12 12"><rect x="0.65" y="0.65" width="10.7" height="10.7" rx="2" fill="#fff" stroke="#858585" stroke-width="1.3"/></svg>
<svg class="b" style="left:52.10px;top:159.50px" width="11.6" height="11.6" viewBox="0 0 12 12"><rect x="0" y="0" width="12" height="12" rx="2.2" fill="#0b7bff"/><path d="M2.6 6.3L5 8.6L9.6 3.3" fill="none" stroke="#fff" stroke-width="1.7" stroke-linecap="round" stroke-linejoin="round"/></svg>
<svg class="b" style="left:1035.10px;top:159.50px" width="11.6" height="11.6" viewBox="0 0 12 12"><rect x="0.65" y="0.65" width="10.7" height="10.7" rx="2" fill="#fff" stroke="#858585" stroke-width="1.3"/></svg>
<div class="t" style="left:79.80px;top:158.05px;line-height:16px;font-size:10.6px;color:#1b1b1b;width:49.20px;text-align:left;overflow:hidden;">0000337</div>
<div class="t" style="left:132.80px;top:158.05px;line-height:16px;font-size:10.6px;color:#1b1b1b;width:20.20px;text-align:left;overflow:hidden;">ПС</div>
<div class="t" style="left:156.80px;top:158.05px;line-height:16px;font-size:10.6px;color:#1b1b1b;width:42.20px;text-align:left;overflow:hidden;">05.03.24</div>
<div class="t" style="left:202.80px;top:158.05px;line-height:16px;font-size:10.6px;color:#1b1b1b;width:27.20px;text-align:left;overflow:hidden;">11:09</div>
<div class="t" style="left:233.80px;top:158.05px;line-height:16px;font-size:10.6px;color:#1b1b1b;width:119.20px;text-align:left;overflow:hidden;">Магазин 12</div>
<div class="t" style="left:356.80px;top:158.05px;line-height:16px;font-size:10.6px;color:#1b1b1b;width:177.20px;text-align:left;overflow:hidden;">Расценка при поставке</div>
<div class="t" style="left:537.80px;top:158.05px;line-height:16px;font-size:10.6px;color:#1b1b1b;width:61.20px;text-align:left;overflow:hidden;">Белорусский</div>
<div class="t" style="left:786.50px;top:158.05px;line-height:16px;font-size:10.6px;color:#1b1b1b;width:49.70px;text-align:right;overflow:hidden;">1</div>
<div class="t" style="left:1062.80px;top:158.05px;line-height:16px;font-size:10.6px;color:#1b1b1b;width:118.20px;text-align:left;overflow:hidden;letter-spacing:-0.45px;">БЕЛХОЗТОРГ ОАО</div>
<div class="t" style="left:1181.50px;top:158.05px;line-height:16px;font-size:10.6px;color:#1b1b1b;width:50.70px;text-align:right;overflow:hidden;">4 000</div>
<div class="b" style="left:0.00px;top:195.00px;width:1247.00px;height:1.00px;background:#e3e3e3;"></div>
<svg class="b" style="left:13.10px;top:179.50px" width="11.6" height="11.6" viewBox="0 0 12 12"><rect x="0.65" y="0.65" width="10.7" height="10.7" rx="2" fill="#fff" stroke="#858585" stroke-width="1.3"/></svg>
<svg class="b" style="left:52.10px;top:179.50px" width="11.6" height="11.6" viewBox="0 0 12 12"><rect x="0" y="0" width="12" height="12" rx="2.2" fill="#0b7bff"/><path d="M2.6 6.3L5 8.6L9.6 3.3" fill="none" stroke="#fff" stroke-width="1.7" stroke-linecap="round" stroke-linejoin="round"/></svg>
<svg class="b" style="left:1035.10px;top:179.50px" width="11.6" height="11.6" viewBox="0 0 12 12"><rect x="0.65" y="0.65" width="10.7" height="10.7" rx="2" fill="#fff" stroke="#858585" stroke-width="1.3"/></svg>
<div class="t" style="left:79.80px;top:178.05px;line-height:16px;font-size:10.6px;color:#1b1b1b;width:49.20px;text-align:left;overflow:hidden;">0000338</div>
<div class="t" style="left:132.80px;top:178.05px;line-height:16px;font-size:10.6px;color:#1b1b1b;width:20.20px;text-align:left;overflow:hidden;">ПС</div>
<div class="t" style="left:156.80px;top:178.05px;line-height:16px;font-size:10.6px;color:#1b1b1b;width:42.20px;text-align:left;overflow:hidden;">04.03.24</div>
<div class="t" style="left:202.80px;top:178.05px;line-height:16px;font-size:10.6px;color:#1b1b1b;width:27.20px;text-align:left;overflow:hidden;">11:15</div>
<div class="t" style="left:233.80px;top:178.05px;line-height:16px;font-size:10.6px;color:#1b1b1b;width:119.20px;text-align:left;overflow:hidden;">Магазин 12</div>
<div class="t" style="left:356.80px;top:178.05px;line-height:16px;font-size:10.6px;color:#1b1b1b;width:177.20px;text-align:left;overflow:hidden;">Расценка при поставке</div>
<div class="t" style="left:537.80px;top:178.05px;line-height:16px;font-size:10.6px;color:#1b1b1b;width:61.20px;text-align:left;overflow:hidden;">Белорусский</div>
<div class="t" style="left:786.50px;top:178.05px;line-height:16px;font-size:10.6px;color:#1b1b1b;width:49.70px;text-align:right;overflow:hidden;">1</div>
<div class="t" style="left:1062.80px;top:178.05px;line-height:16px;font-size:10.6px;color:#1b1b1b;width:118.20px;text-align:left;overflow:hidden;">AzizaDi</div>
<div class="t" style="left:1181.50px;top:178.05px;line-height:16px;font-size:10.6px;color:#1b1b1b;width:50.70px;text-align:right;overflow:hidden;">100</div>
<div class="b" style="left:0.00px;top:216.00px;width:1247.00px;height:1.00px;background:#e3e3e3;"></div>
<svg class="b" style="left:13.10px;top:199.50px" width="11.6" height="11.6" viewBox="0 0 12 12"><rect x="0.65" y="0.65" width="10.7" height="10.7" rx="2" fill="#fff" stroke="#858585" stroke-width="1.3"/></svg>
<svg class="b" style="left:52.10px;top:199.50px" width="11.6" height="11.6" viewBox="0 0 12 12"><rect x="0" y="0" width="12" height="12" rx="2.2" fill="#0b7bff"/><path d="M2.6 6.3L5 8.6L9.6 3.3" fill="none" stroke="#fff" stroke-width="1.7" stroke-linecap="round" stroke-linejoin="round"/></svg>
<svg class="b" style="left:1035.10px;top:199.50px" width="11.6" height="11.6" viewBox="0 0 12 12"><rect x="0" y="0" width="12" height="12" rx="2.2" fill="#0b7bff"/><path d="M2.6 6.3L5 8.6L9.6 3.3" fill="none" stroke="#fff" stroke-width="1.7" stroke-linecap="round" stroke-linejoin="round"/></svg>
<div class="t" style="left:79.80px;top:198.05px;line-height:16px;font-size:10.6px;color:#1b1b1b;width:49.20px;text-align:left;overflow:hidden;">00056</div>
<div class="t" style="left:132.80px;top:198.05px;line-height:16px;font-size:10.6px;color:#1b1b1b;width:20.20px;text-align:left;overflow:hidden;">ПС</div>
<div class="t" style="left:156.80px;top:198.05px;line-height:16px;font-size:10.6px;color:#1b1b1b;width:42.20px;text-align:left;overflow:hidden;">06.03.24</div>
<div class="t" style="left:202.80px;top:198.05px;line-height:16px;font-size:10.6px;color:#1b1b1b;width:27.20px;text-align:left;overflow:hidden;">11:09</div>
<div class="t" style="left:233.80px;top:198.05px;line-height:16px;font-size:10.6px;color:#1b1b1b;width:119.20px;text-align:left;overflow:hidden;">Магазин 12</div>
<div class="t" style="left:356.80px;top:198.05px;line-height:16px;font-size:10.6px;color:#1b1b1b;width:177.20px;text-align:left;overflow:hidden;">Расценка при поставке</div>
<div class="t" style="left:537.80px;top:198.05px;line-height:16px;font-size:10.6px;color:#1b1b1b;width:61.20px;text-align:left;overflow:hidden;">Белорусский</div>
<div class="t" style="left:786.50px;top:198.05px;line-height:16px;font-size:10.6px;color:#1b1b1b;width:49.70px;text-align:right;overflow:hidden;">1</div>
<div class="t" style="left:1062.80px;top:198.05px;line-height:16px;font-size:10.6px;color:#1b1b1b;width:118.20px;text-align:left;overflow:hidden;letter-spacing:-0.45px;">БЕЛХОЗТОРГ ОАО</div>
<div class="t" style="left:1181.50px;top:198.05px;line-height:16px;font-size:10.6px;color:#1b1b1b;width:50.70px;text-align:right;overflow:hidden;">200</div>
<div class="b" style="left:0.00px;top:236.00px;width:1247.00px;height:1.00px;background:#e3e3e3;"></div>
<svg class="b" style="left:13.10px;top:220.50px" width="11.6" height="11.6" viewBox="0 0 12 12"><rect x="0.65" y="0.65" width="10.7" height="10.7" rx="2" fill="#fff" stroke="#858585" stroke-width="1.3"/></svg>
<svg class="b" style="left:52.10px;top:220.50px" width="11.6" height="11.6" viewBox="0 0 12 12"><rect x="0" y="0" width="12" height="12" rx="2.2" fill="#0b7bff"/><path d="M2.6 6.3L5 8.6L9.6 3.3" fill="none" stroke="#fff" stroke-width="1.7" stroke-linecap="round" stroke-linejoin="round"/></svg>
<svg class="b" style="left:1035.10px;top:220.50px" width="11.6" height="11.6" viewBox="0 0 12 12"><rect x="0.65" y="0.65" width="10.7" height="10.7" rx="2" fill="#fff" stroke="#858585" stroke-width="1.3"/></svg>
<div class="t" style="left:79.80px;top:219.05px;line-height:16px;font-size:10.6px;color:#1b1b1b;width:49.20px;text-align:left;overflow:hidden;">0000339</div>
<div class="t" style="left:132.80px;top:219.05px;line-height:16px;font-size:10.6px;color:#1b1b1b;width:20.20px;text-align:left;overflow:hidden;">ПС</div>
<div class="t" style="left:156.80px;top:219.05px;line-height:16px;font-size:10.6px;color:#1b1b1b;width:42.20px;text-align:left;overflow:hidden;">06.03.24</div>
<div class="t" style="left:202.80px;top:219.05px;line-height:16px;font-size:10.6px;color:#1b1b1b;width:27.20px;text-align:left;overflow:hidden;">17:14</div>
<div class="t" style="left:233.80px;top:219.05px;line-height:16px;font-size:10.6px;color:#1b1b1b;width:119.20px;text-align:left;overflow:hidden;">Магазин 12</div>
<div class="t" style="left:356.80px;top:219.05px;line-height:16px;font-size:10.6px;color:#1b1b1b;width:177.20px;text-align:left;overflow:hidden;">Расценка при поставке</div>
<div class="t" style="left:537.80px;top:219.05px;line-height:16px;font-size:10.6px;color:#1b1b1b;width:61.20px;text-align:left;overflow:hidden;">Белорусский</div>
<div class="t" style="left:786.50px;top:219.05px;line-height:16px;font-size:10.6px;color:#1b1b1b;width:49.70px;text-align:right;overflow:hidden;">1</div>
<div class="t" style="left:1062.80px;top:219.05px;line-height:16px;font-size:10.6px;color:#1b1b1b;width:118.20px;text-align:left;overflow:hidden;letter-spacing:-0.45px;">АГРОКОМБИНАТ КОЛОС</div>
<div class="t" style="left:1181.50px;top:219.05px;line-height:16px;font-size:10.6px;color:#1b1b1b;width:50.70px;text-align:right;overflow:hidden;">1</div>
<div class="b" style="left:0.00px;top:256.00px;width:1247.00px;height:1.00px;background:#e3e3e3;"></div>
<svg class="b" style="left:13.10px;top:240.50px" width="11.6" height="11.6" viewBox="0 0 12 12"><rect x="0.65" y="0.65" width="10.7" height="10.7" rx="2" fill="#fff" stroke="#858585" stroke-width="1.3"/></svg>
<svg class="b" style="left:52.10px;top:240.50px" width="11.6" height="11.6" viewBox="0 0 12 12"><rect x="0" y="0" width="12" height="12" rx="2.2" fill="#0b7bff"/><path d="M2.6 6.3L5 8.6L9.6 3.3" fill="none" stroke="#fff" stroke-width="1.7" stroke-linecap="round" stroke-linejoin="round"/></svg>
<svg class="b" style="left:1035.10px;top:240.50px" width="11.6" height="11.6" viewBox="0 0 12 12"><rect x="0" y="0" width="12" height="12" rx="2.2" fill="#0b7bff"/><path d="M2.6 6.3L5 8.6L9.6 3.3" fill="none" stroke="#fff" stroke-width="1.7" stroke-linecap="round" stroke-linejoin="round"/></svg>
<div class="t" style="left:79.80px;top:239.05px;line-height:16px;font-size:10.6px;color:#1b1b1b;width:49.20px;text-align:left;overflow:hidden;">0000118</div>
<div class="t" style="left:132.80px;top:239.05px;line-height:16px;font-size:10.6px;color:#1b1b1b;width:20.20px;text-align:left;overflow:hidden;">ПС</div>
<div class="t" style="left:156.80px;top:239.05px;line-height:16px;font-size:10.6px;color:#1b1b1b;width:42.20px;text-align:left;overflow:hidden;">06.03.24</div>
<div class="t" style="left:202.80px;top:239.05px;line-height:16px;font-size:10.6px;color:#1b1b1b;width:27.20px;text-align:left;overflow:hidden;">11:14</div>
<div class="t" style="left:233.80px;top:239.05px;line-height:16px;font-size:10.6px;color:#1b1b1b;width:119.20px;text-align:left;overflow:hidden;">Магазин 12</div>
<div class="t" style="left:356.80px;top:239.05px;line-height:16px;font-size:10.6px;color:#1b1b1b;width:177.20px;text-align:left;overflow:hidden;">На приходе</div>
<div class="t" style="left:537.80px;top:239.05px;line-height:16px;font-size:10.6px;color:#1b1b1b;width:61.20px;text-align:left;overflow:hidden;">Белорусский</div>
<div class="t" style="left:786.50px;top:239.05px;line-height:16px;font-size:10.6px;color:#1b1b1b;width:49.70px;text-align:right;overflow:hidden;">1</div>
<div class="t" style="left:1062.80px;top:239.05px;line-height:16px;font-size:10.6px;color:#1b1b1b;width:118.20px;text-align:left;overflow:hidden;">ОДО "ЛюксСофтСервис"</div>
<div class="t" style="left:1181.50px;top:239.05px;line-height:16px;font-size:10.6px;color:#1b1b1b;width:50.70px;text-align:right;overflow:hidden;">1</div>
<div class="b" style="left:0.00px;top:276.00px;width:1247.00px;height:1.00px;background:#e3e3e3;"></div>
<svg class="b" style="left:13.10px;top:260.50px" width="11.6" height="11.6" viewBox="0 0 12 12"><rect x="0.65" y="0.65" width="10.7" height="10.7" rx="2" fill="#fff" stroke="#858585" stroke-width="1.3"/></svg>
<svg class="b" style="left:52.10px;top:260.50px" width="11.6" height="11.6" viewBox="0 0 12 12"><rect x="0" y="0" width="12" height="12" rx="2.2" fill="#0b7bff"/><path d="M2.6 6.3L5 8.6L9.6 3.3" fill="none" stroke="#fff" stroke-width="1.7" stroke-linecap="round" stroke-linejoin="round"/></svg>
<svg class="b" style="left:1035.10px;top:260.50px" width="11.6" height="11.6" viewBox="0 0 12 12"><rect x="0.65" y="0.65" width="10.7" height="10.7" rx="2" fill="#fff" stroke="#858585" stroke-width="1.3"/></svg>
<div class="t" style="left:79.80px;top:259.05px;line-height:16px;font-size:10.6px;color:#1b1b1b;width:49.20px;text-align:left;overflow:hidden;">0000340</div>
<div class="t" style="left:132.80px;top:259.05px;line-height:16px;font-size:10.6px;color:#1b1b1b;width:20.20px;text-align:left;overflow:hidden;">ПС</div>
<div class="t" style="left:156.80px;top:259.05px;line-height:16px;font-size:10.6px;color:#1b1b1b;width:42.20px;text-align:left;overflow:hidden;">06.03.24</div>
<div class="t" style="left:202.80px;top:259.05px;line-height:16px;font-size:10.6px;color:#1b1b1b;width:27.20px;text-align:left;overflow:hidden;">17:23</div>
<div class="t" style="left:233.80px;top:259.05px;line-height:16px;font-size:10.6px;color:#1b1b1b;width:119.20px;text-align:left;overflow:hidden;">Магазин 12</div>
<div class="t" style="left:356.80px;top:259.05px;line-height:16px;font-size:10.6px;color:#1b1b1b;width:177.20px;text-align:left;overflow:hidden;">Расценка при поставке</div>
<div class="t" style="left:537.80px;top:259.05px;line-height:16px;font-size:10.6px;color:#1b1b1b;width:61.20px;text-align:left;overflow:hidden;">Белорусский</div>
<div class="t" style="left:786.50px;top:259.05px;line-height:16px;font-size:10.6px;color:#1b1b1b;width:49.70px;text-align:right;overflow:hidden;">4</div>
<div class="t" style="left:1062.80px;top:259.05px;line-height:16px;font-size:10.6px;color:#1b1b1b;width:118.20px;text-align:left;overflow:hidden;letter-spacing:-0.45px;">ГП МОГОСТ</div>
<div class="t" style="left:1181.50px;top:259.05px;line-height:16px;font-size:10.6px;color:#1b1b1b;width:50.70px;text-align:right;overflow:hidden;">5</div>
<div class="b" style="left:0.00px;top:296.00px;width:1247.00px;height:1.00px;background:#e3e3e3;"></div>
<svg class="b" style="left:13.10px;top:280.50px" width="11.6" height="11.6" viewBox="0 0 12 12"><rect x="0.65" y="0.65" width="10.7" height="10.7" rx="2" fill="#fff" stroke="#858585" stroke-width="1.3"/></svg>
<svg class="b" style="left:52.10px;top:280.50px" width="11.6" height="11.6" viewBox="0 0 12 12"><rect x="0" y="0" width="12" height="12" rx="2.2" fill="#0b7bff"/><path d="M2.6 6.3L5 8.6L9.6 3.3" fill="none" stroke="#fff" stroke-width="1.7" stroke-linecap="round" stroke-linejoin="round"/></svg>
<svg class="b" style="left:1035.10px;top:280.50px" width="11.6" height="11.6" viewBox="0 0 12 12"><rect x="0.65" y="0.65" width="10.7" height="10.7" rx="2" fill="#fff" stroke="#858585" stroke-width="1.3"/></svg>
<div class="t" style="left:79.80px;top:279.05px;line-height:16px;font-size:10.6px;color:#1b1b1b;width:49.20px;text-align:left;overflow:hidden;">00049</div>
<div class="t" style="left:132.80px;top:279.05px;line-height:16px;font-size:10.6px;color:#1b1b1b;width:20.20px;text-align:left;overflow:hidden;">ПЗ</div>
<div class="t" style="left:156.80px;top:279.05px;line-height:16px;font-size:10.6px;color:#1b1b1b;width:42.20px;text-align:left;overflow:hidden;">06.03.24</div>
<div class="t" style="left:202.80px;top:279.05px;line-height:16px;font-size:10.6px;color:#1b1b1b;width:27.20px;text-align:left;overflow:hidden;">13:22</div>
<div class="t" style="left:233.80px;top:279.05px;line-height:16px;font-size:10.6px;color:#1b1b1b;width:119.20px;text-align:left;overflow:hidden;">Кафетерий</div>
<div class="t" style="left:356.80px;top:279.05px;line-height:16px;font-size:10.6px;color:#1b1b1b;width:177.20px;text-align:left;overflow:hidden;">Расценка собственного производства</div>
<div class="t" style="left:537.80px;top:279.05px;line-height:16px;font-size:10.6px;color:#1b1b1b;width:61.20px;text-align:left;overflow:hidden;">Белорусский</div>
<div class="t" style="left:786.50px;top:279.05px;line-height:16px;font-size:10.6px;color:#1b1b1b;width:49.70px;text-align:right;overflow:hidden;">5</div>
<div class="t" style="left:1062.80px;top:279.05px;line-height:16px;font-size:10.6px;color:#1b1b1b;width:118.20px;text-align:left;overflow:hidden;">ЗАО "ЛюксСофтТорг"</div>
<div class="t" style="left:1181.50px;top:279.05px;line-height:16px;font-size:10.6px;color:#1b1b1b;width:50.70px;text-align:right;overflow:hidden;">10</div>
<div class="b" style="left:0.00px;top:317.00px;width:1247.00px;height:1.00px;background:#e3e3e3;"></div>
<svg class="b" style="left:13.10px;top:300.50px" width="11.6" height="11.6" viewBox="0 0 12 12"><rect x="0.65" y="0.65" width="10.7" height="10.7" rx="2" fill="#fff" stroke="#858585" stroke-width="1.3"/></svg>
<svg class="b" style="left:52.10px;top:300.50px" width="11.6" height="11.6" viewBox="0 0 12 12"><rect x="0" y="0" width="12" height="12" rx="2.2" fill="#0b7bff"/><path d="M2.6 6.3L5 8.6L9.6 3.3" fill="none" stroke="#fff" stroke-width="1.7" stroke-linecap="round" stroke-linejoin="round"/></svg>
<svg class="b" style="left:1035.10px;top:300.50px" width="11.6" height="11.6" viewBox="0 0 12 12"><rect x="0.65" y="0.65" width="10.7" height="10.7" rx="2" fill="#fff" stroke="#858585" stroke-width="1.3"/></svg>
<div class="t" style="left:79.80px;top:299.05px;line-height:16px;font-size:10.6px;color:#1b1b1b;width:49.20px;text-align:left;overflow:hidden;">002-20210306</div>
<div class="t" style="left:156.80px;top:299.05px;line-height:16px;font-size:10.6px;color:#1b1b1b;width:42.20px;text-align:left;overflow:hidden;">06.03.24</div>
<div class="t" style="left:202.80px;top:299.05px;line-height:16px;font-size:10.6px;color:#1b1b1b;width:27.20px;text-align:left;overflow:hidden;">00:00</div>
<div class="t" style="left:233.80px;top:299.05px;line-height:16px;font-size:10.6px;color:#1b1b1b;width:119.20px;text-align:left;overflow:hidden;">Магазин 12</div>
<div class="t" style="left:356.80px;top:299.05px;line-height:16px;font-size:10.6px;color:#1b1b1b;width:177.20px;text-align:left;overflow:hidden;">Расценка при поставке</div>
<div class="t" style="left:537.80px;top:299.05px;line-height:16px;font-size:10.6px;color:#1b1b1b;width:61.20px;text-align:left;overflow:hidden;">Белорусский</div>
<div class="t" style="left:786.50px;top:299.05px;line-height:16px;font-size:10.6px;color:#1b1b1b;width:49.70px;text-align:right;overflow:hidden;">1</div>
<div class="t" style="left:1062.80px;top:299.05px;line-height:16px;font-size:10.6px;color:#1b1b1b;width:118.20px;text-align:left;overflow:hidden;letter-spacing:-0.45px;">ГП МОГОСТ</div>
<div class="t" style="left:1181.50px;top:299.05px;line-height:16px;font-size:10.6px;color:#1b1b1b;width:50.70px;text-align:right;overflow:hidden;">4</div>
<div class="b" style="left:0.00px;top:337.00px;width:1247.00px;height:1.00px;background:#e3e3e3;"></div>
<svg class="b" style="left:13.10px;top:321.50px" width="11.6" height="11.6" viewBox="0 0 12 12"><rect x="0.65" y="0.65" width="10.7" height="10.7" rx="2" fill="#fff" stroke="#858585" stroke-width="1.3"/></svg>
<svg class="b" style="left:52.10px;top:321.50px" width="11.6" height="11.6" viewBox="0 0 12 12"><rect x="0.65" y="0.65" width="10.7" height="10.7" rx="2" fill="#fff" stroke="#858585" stroke-width="1.3"/></svg>
<svg class="b" style="left:1035.10px;top:321.50px" width="11.6" height="11.6" viewBox="0 0 12 12"><rect x="0" y="0" width="12" height="12" rx="2.2" fill="#0b7bff"/><path d="M2.6 6.3L5 8.6L9.6 3.3" fill="none" stroke="#fff" stroke-width="1.7" stroke-linecap="round" stroke-linejoin="round"/></svg>
<div class="t" style="left:79.80px;top:320.05px;line-height:16px;font-size:10.6px;color:#1b1b1b;width:49.20px;text-align:left;overflow:hidden;">00057</div>
<div class="t" style="left:132.80px;top:320.05px;line-height:16px;font-size:10.6px;color:#1b1b1b;width:20.20px;text-align:left;overflow:hidden;">ПС</div>
<div class="t" style="left:156.80px;top:320.05px;line-height:16px;font-size:10.6px;color:#1b1b1b;width:42.20px;text-align:left;overflow:hidden;">06.03.24</div>
<div class="t" style="left:202.80px;top:320.05px;line-height:16px;font-size:10.6px;color:#1b1b1b;width:27.20px;text-align:left;overflow:hidden;">18:39</div>
<div class="t" style="left:233.80px;top:320.05px;line-height:16px;font-size:10.6px;color:#1b1b1b;width:119.20px;text-align:left;overflow:hidden;">Магазин 11</div>
<div class="t" style="left:356.80px;top:320.05px;line-height:16px;font-size:10.6px;color:#1b1b1b;width:177.20px;text-align:left;overflow:hidden;">Расценка при поставке</div>
<div class="t" style="left:537.80px;top:320.05px;line-height:16px;font-size:10.6px;color:#1b1b1b;width:61.20px;text-align:left;overflow:hidden;">Белорусский</div>
<div class="t" style="left:786.50px;top:320.05px;line-height:16px;font-size:10.6px;color:#1b1b1b;width:49.70px;text-align:right;overflow:hidden;">1</div>
<div class="t" style="left:1062.80px;top:320.05px;line-height:16px;font-size:10.6px;color:#1b1b1b;width:118.20px;text-align:left;overflow:hidden;letter-spacing:-0.45px;">МОРОЗПРОДУКТ СООО</div>
<div class="t" style="left:1181.50px;top:320.05px;line-height:16px;font-size:10.6px;color:#1b1b1b;width:50.70px;text-align:right;overflow:hidden;">1</div>
<div class="b" style="left:0.00px;top:357.00px;width:1247.00px;height:1.00px;background:#e3e3e3;"></div>
<svg class="b" style="left:13.10px;top:341.50px" width="11.6" height="11.6" viewBox="0 0 12 12"><rect x="0.65" y="0.65" width="10.7" height="10.7" rx="2" fill="#fff" stroke="#858585" stroke-width="1.3"/></svg>
<svg class="b" style="left:52.10px;top:341.50px" width="11.6" height="11.6" viewBox="0 0 12 12"><rect x="0" y="0" width="12" height="12" rx="2.2" fill="#0b7bff"/><path d="M2.6 6.3L5 8.6L9.6 3.3" fill="none" stroke="#fff" stroke-width="1.7" stroke-linecap="round" stroke-linejoin="round"/></svg>
<svg class="b" style="left:1035.10px;top:341.50px" width="11.6" height="11.6" viewBox="0 0 12 12"><rect x="0" y="0" width="12" height="12" rx="2.2" fill="#0b7bff"/><path d="M2.6 6.3L5 8.6L9.6 3.3" fill="none" stroke="#fff" stroke-width="1.7" stroke-linecap="round" stroke-linejoin="round"/></svg>
<div class="t" style="left:79.80px;top:340.05px;line-height:16px;font-size:10.6px;color:#1b1b1b;width:49.20px;text-align:left;overflow:hidden;">7583728</div>
<div class="t" style="left:132.80px;top:340.05px;line-height:16px;font-size:10.6px;color:#1b1b1b;width:20.20px;text-align:left;overflow:hidden;">ПС</div>
<div class="t" style="left:156.80px;top:340.05px;line-height:16px;font-size:10.6px;color:#1b1b1b;width:42.20px;text-align:left;overflow:hidden;">06.03.24</div>
<div class="t" style="left:202.80px;top:340.05px;line-height:16px;font-size:10.6px;color:#1b1b1b;width:27.20px;text-align:left;overflow:hidden;">18:22</div>
<div class="t" style="left:233.80px;top:340.05px;line-height:16px;font-size:10.6px;color:#1b1b1b;width:119.20px;text-align:left;overflow:hidden;">ЛюксСофтТрейд2</div>
<div class="t" style="left:356.80px;top:340.05px;line-height:16px;font-size:10.6px;color:#1b1b1b;width:177.20px;text-align:left;overflow:hidden;">Расценка при поставке</div>
<div class="t" style="left:537.80px;top:340.05px;line-height:16px;font-size:10.6px;color:#1b1b1b;width:61.20px;text-align:left;overflow:hidden;">Белорусский</div>
<div class="t" style="left:786.50px;top:340.05px;line-height:16px;font-size:10.6px;color:#1b1b1b;width:49.70px;text-align:right;overflow:hidden;">2</div>
<div class="t" style="left:1062.80px;top:340.05px;line-height:16px;font-size:10.6px;color:#1b1b1b;width:118.20px;text-align:left;overflow:hidden;">ЗАО "ЛюксСофтТорг"</div>
<div class="t" style="left:1181.50px;top:340.05px;line-height:16px;font-size:10.6px;color:#1b1b1b;width:50.70px;text-align:right;overflow:hidden;">35</div>
<div class="b" style="left:0.00px;top:358.00px;width:1247.00px;height:19.00px;background:#d3e4e9;"></div>
<div class="b" style="left:0.00px;top:377.00px;width:1247.00px;height:1.00px;background:#e3e3e3;"></div>
<svg class="b" style="left:13.10px;top:361.50px" width="11.6" height="11.6" viewBox="0 0 12 12"><rect x="0.65" y="0.65" width="10.7" height="10.7" rx="2" fill="#fff" stroke="#858585" stroke-width="1.3"/></svg>
<svg class="b" style="left:52.10px;top:361.50px" width="11.6" height="11.6" viewBox="0 0 12 12"><rect x="0" y="0" width="12" height="12" rx="2.2" fill="#0b7bff"/><path d="M2.6 6.3L5 8.6L9.6 3.3" fill="none" stroke="#fff" stroke-width="1.7" stroke-linecap="round" stroke-linejoin="round"/></svg>
<svg class="b" style="left:1035.10px;top:361.50px" width="11.6" height="11.6" viewBox="0 0 12 12"><rect x="0" y="0" width="12" height="12" rx="2.2" fill="#0b7bff"/><path d="M2.6 6.3L5 8.6L9.6 3.3" fill="none" stroke="#fff" stroke-width="1.7" stroke-linecap="round" stroke-linejoin="round"/></svg>
<div class="t" style="left:79.80px;top:360.05px;line-height:16px;font-size:10.6px;color:#1b1b1b;width:49.20px;text-align:left;overflow:hidden;">00058</div>
<div class="t" style="left:132.80px;top:360.05px;line-height:16px;font-size:10.6px;color:#1b1b1b;width:20.20px;text-align:left;overflow:hidden;">ПС</div>
<div class="t" style="left:156.80px;top:360.05px;line-height:16px;font-size:10.6px;color:#1b1b1b;width:42.20px;text-align:left;overflow:hidden;">06.03.24</div>
<div class="t" style="left:202.80px;top:360.05px;line-height:16px;font-size:10.6px;color:#1b1b1b;width:27.20px;text-align:left;overflow:hidden;">01:50</div>
<div class="t" style="left:233.80px;top:360.05px;line-height:16px;font-size:10.6px;color:#1b1b1b;width:119.20px;text-align:left;overflow:hidden;">ЛюксСофтТрейд2</div>
<div class="t" style="left:356.80px;top:360.05px;line-height:16px;font-size:10.6px;color:#1b1b1b;width:177.20px;text-align:left;overflow:hidden;">Расценка при поставке</div>
<div class="t" style="left:537.80px;top:360.05px;line-height:16px;font-size:10.6px;color:#1b1b1b;width:61.20px;text-align:left;overflow:hidden;">Белорусский</div>
<div class="t" style="left:786.50px;top:360.05px;line-height:16px;font-size:10.6px;color:#1b1b1b;width:49.70px;text-align:right;overflow:hidden;">3</div>
<div class="t" style="left:1062.80px;top:360.05px;line-height:16px;font-size:10.6px;color:#1b1b1b;width:118.20px;text-align:left;overflow:hidden;letter-spacing:-0.45px;">ДАНОН БЕЛ ИООО</div>
<div class="t" style="left:1181.50px;top:360.05px;line-height:16px;font-size:10.6px;color:#1b1b1b;width:50.70px;text-align:right;overflow:hidden;">3</div>
<div class="b" style="left:0.00px;top:397.00px;width:1247.00px;height:1.00px;background:#e3e3e3;"></div>
<svg class="b" style="left:13.10px;top:381.50px" width="11.6" height="11.6" viewBox="0 0 12 12"><rect x="0.65" y="0.65" width="10.7" height="10.7" rx="2" fill="#fff" stroke="#858585" stroke-width="1.3"/></svg>
<svg class="b" style="left:52.10px;top:381.50px" width="11.6" height="11.6" viewBox="0 0 12 12"><rect x="0.65" y="0.65" width="10.7" height="10.7" rx="2" fill="#fff" stroke="#858585" stroke-width="1.3"/></svg>
<svg class="b" style="left:1035.10px;top:381.50px" width="11.6" height="11.6" viewBox="0 0 12 12"><rect x="0" y="0" width="12" height="12" rx="2.2" fill="#0b7bff"/><path d="M2.6 6.3L5 8.6L9.6 3.3" fill="none" stroke="#fff" stroke-width="1.7" stroke-linecap="round" stroke-linejoin="round"/></svg>
<div class="t" style="left:79.80px;top:380.05px;line-height:16px;font-size:10.6px;color:#1b1b1b;width:49.20px;text-align:left;overflow:hidden;">00124</div>
<div class="t" style="left:132.80px;top:380.05px;line-height:16px;font-size:10.6px;color:#1b1b1b;width:20.20px;text-align:left;overflow:hidden;">ПС</div>
<div class="t" style="left:156.80px;top:380.05px;line-height:16px;font-size:10.6px;color:#1b1b1b;width:42.20px;text-align:left;overflow:hidden;">06.03.24</div>
<div class="t" style="left:202.80px;top:380.05px;line-height:16px;font-size:10.6px;color:#1b1b1b;width:27.20px;text-align:left;overflow:hidden;">08:26</div>
<div class="t" style="left:233.80px;top:380.05px;line-height:16px;font-size:10.6px;color:#1b1b1b;width:119.20px;text-align:left;overflow:hidden;">Магазин 12</div>
<div class="t" style="left:356.80px;top:380.05px;line-height:16px;font-size:10.6px;color:#1b1b1b;width:177.20px;text-align:left;overflow:hidden;">Расценка при поставке</div>
<div class="t" style="left:537.80px;top:380.05px;line-height:16px;font-size:10.6px;color:#1b1b1b;width:61.20px;text-align:left;overflow:hidden;">Белорусский</div>
<div class="t" style="left:786.50px;top:380.05px;line-height:16px;font-size:10.6px;color:#1b1b1b;width:49.70px;text-align:right;overflow:hidden;">1</div>
<div class="t" style="left:1062.80px;top:380.05px;line-height:16px;font-size:10.6px;color:#1b1b1b;width:118.20px;text-align:left;overflow:hidden;">ОДО "ЛюксСофтСервис"</div>
<div class="t" style="left:1181.50px;top:380.05px;line-height:16px;font-size:10.6px;color:#1b1b1b;width:50.70px;text-align:right;overflow:hidden;">155</div>
<div class="b" style="left:0.00px;top:417.00px;width:1247.00px;height:1.00px;background:#e3e3e3;"></div>
<svg class="b" style="left:13.10px;top:401.50px" width="11.6" height="11.6" viewBox="0 0 12 12"><rect x="0.65" y="0.65" width="10.7" height="10.7" rx="2" fill="#fff" stroke="#858585" stroke-width="1.3"/></svg>
<svg class="b" style="left:52.10px;top:401.50px" width="11.6" height="11.6" viewBox="0 0 12 12"><rect x="0.65" y="0.65" width="10.7" height="10.7" rx="2" fill="#fff" stroke="#858585" stroke-width="1.3"/></svg>
<svg class="b" style="left:1035.10px;top:401.50px" width="11.6" height="11.6" viewBox="0 0 12 12"><rect x="0" y="0" width="12" height="12" rx="2.2" fill="#0b7bff"/><path d="M2.6 6.3L5 8.6L9.6 3.3" fill="none" stroke="#fff" stroke-width="1.7" stroke-linecap="round" stroke-linejoin="round"/></svg>
<div class="t" style="left:79.80px;top:400.05px;line-height:16px;font-size:10.6px;color:#1b1b1b;width:49.20px;text-align:left;overflow:hidden;">00059</div>
<div class="t" style="left:132.80px;top:400.05px;line-height:16px;font-size:10.6px;color:#1b1b1b;width:20.20px;text-align:left;overflow:hidden;">ПС</div>
<div class="t" style="left:156.80px;top:400.05px;line-height:16px;font-size:10.6px;color:#1b1b1b;width:42.20px;text-align:left;overflow:hidden;">06.03.24</div>
<div class="t" style="left:202.80px;top:400.05px;line-height:16px;font-size:10.6px;color:#1b1b1b;width:27.20px;text-align:left;overflow:hidden;">18:26</div>
<div class="t" style="left:233.80px;top:400.05px;line-height:16px;font-size:10.6px;color:#1b1b1b;width:119.20px;text-align:left;overflow:hidden;">ЛюксСофтТрейд2</div>
<div class="t" style="left:356.80px;top:400.05px;line-height:16px;font-size:10.6px;color:#1b1b1b;width:177.20px;text-align:left;overflow:hidden;">Расценка при поставке</div>
<div class="t" style="left:537.80px;top:400.05px;line-height:16px;font-size:10.6px;color:#1b1b1b;width:61.20px;text-align:left;overflow:hidden;">Российский</div>
<div class="t" style="left:786.50px;top:400.05px;line-height:16px;font-size:10.6px;color:#1b1b1b;width:49.70px;text-align:right;overflow:hidden;">1</div>
<div class="t" style="left:1062.80px;top:400.05px;line-height:16px;font-size:10.6px;color:#1b1b1b;width:118.20px;text-align:left;overflow:hidden;letter-spacing:-0.45px;">ПЕРСПЕКТИВА ООО</div>
<div class="t" style="left:1181.50px;top:400.05px;line-height:16px;font-size:10.6px;color:#1b1b1b;width:50.70px;text-align:right;overflow:hidden;">20</div>
<div class="b" style="left:37.00px;top:49.30px;width:1.00px;height:368.20px;background:#e3e3e3;"></div>
<div class="b" style="left:76.00px;top:49.30px;width:1.00px;height:368.20px;background:#e3e3e3;"></div>
<div class="b" style="left:129.00px;top:49.30px;width:1.00px;height:368.20px;background:#e3e3e3;"></div>
<div class="b" style="left:153.00px;top:49.30px;width:1.00px;height:368.20px;background:#e3e3e3;"></div>
<div class="b" style="left:199.00px;top:49.30px;width:1.00px;height:368.20px;background:#e3e3e3;"></div>
<div class="b" style="left:230.00px;top:49.30px;width:1.00px;height:368.20px;background:#e3e3e3;"></div>
<div class="b" style="left:353.00px;top:49.30px;width:1.00px;height:368.20px;background:#e3e3e3;"></div>
<div class="b" style="left:534.00px;top:49.30px;width:1.00px;height:368.20px;background:#e3e3e3;"></div>
<div class="b" style="left:599.00px;top:49.30px;width:1.00px;height:368.20px;background:#e3e3e3;"></div>
<div class="b" style="left:692.00px;top:49.30px;width:1.00px;height:368.20px;background:#e3e3e3;"></div>
<div class="b" style="left:786.00px;top:49.30px;width:1.00px;height:368.20px;background:#e3e3e3;"></div>
<div class="b" style="left:839.00px;top:49.30px;width:1.00px;height:368.20px;background:#e3e3e3;"></div>
<div class="b" style="left:1020.00px;top:49.30px;width:1.00px;height:368.20px;background:#e3e3e3;"></div>
<div class="b" style="left:1059.00px;top:49.30px;width:1.00px;height:368.20px;background:#e3e3e3;"></div>
<div class="b" style="left:1181.00px;top:49.30px;width:1.00px;height:368.20px;background:#e3e3e3;"></div>
<div class="b" style="left:1235.00px;top:49.30px;width:1.00px;height:368.20px;background:#e3e3e3;"></div>
<div class="b" style="left:353.00px;top:358.00px;width:182.00px;height:20.50px;border:1px solid #2a7ea6;"></div>
<div class="b" style="left:17.00px;top:420.00px;width:782.00px;height:13.00px;background:#d9d9d9;"></div>
<svg class="b" style="left:6px;top:422px" width="5" height="9" viewBox="0 0 5 9"><path d="M4.5 0.5V8.5L0.5 4.5Z" fill="#d0d0d0"/></svg>
<svg class="b" style="left:1237px;top:422px" width="5" height="9" viewBox="0 0 5 9"><path d="M0.5 0.5V8.5L4.5 4.5Z" fill="#d0d0d0"/></svg>
</div>
<div class="b" style="left:1575.20px;top:473.00px;width:12.60px;height:52.00px;background:#d9d9d9;"></div>
<svg class="b" style="left:1577.50px;top:130.00px" width="9" height="5" viewBox="0 0 9 5"><path d="M0.5 4.5H8.5L4.5 0.5Z" fill="#d0d0d0"/></svg>
<svg class="b" style="left:1577.50px;top:530.00px" width="9" height="5" viewBox="0 0 9 5"><path d="M0.5 0.5H8.5L4.5 4.5Z" fill="#d0d0d0"/></svg>
<div class="b" style="left:325.00px;top:564.00px;width:25.00px;height:19.50px;background:#d5e4e8;border-radius:4px;"></div>
<svg class="b" style="left:329.50px;top:566.50px" width="16" height="15" viewBox="0 0 16 15"><circle cx="2" cy="3" r="1.3" stroke="#4ec3ee" fill="none" stroke-width="1.3"/><circle cx="2" cy="7.5" r="1.3" stroke="#4ec3ee" fill="none" stroke-width="1.3"/><circle cx="2" cy="12" r="1.3" stroke="#4ec3ee" fill="none" stroke-width="1.3"/>
<path d="M6 3H14M6 7.5H14M6 12H14" stroke="#333" fill="none" stroke-width="1.3" stroke-width="1.5"/></svg>
<svg class="b" style="left:355.00px;top:566.50px" width="16" height="15" viewBox="0 0 16 15"><rect x="0.7" y="0.7" width="14" height="13" rx="1.2" fill="#fff" stroke="none"/>
<path d="M5.7 1V14M10 1V14M1 5H14.5M1 9.6H14.5" stroke="#4ec3ee" fill="none" stroke-width="1.3" stroke-width="1.2"/>
<rect x="0.7" y="0.7" width="14" height="13" rx="1.2" stroke="#2a2a2a" fill="none" stroke-width="1.3" stroke-width="1.4"/></svg>
<svg class="b" style="left:379.70px;top:566.50px" width="16" height="15" viewBox="0 0 16 15"><rect x="0.7" y="2.7" width="14" height="11" rx="1.5" fill="#fff" stroke="none"/>
<path d="M2 10H13M5 7.5V12.5M9.6 7.5V12.5" stroke="#4ec3ee" fill="none" stroke-width="1.3" stroke-width="1.2"/>
<rect x="0.7" y="2.7" width="14" height="11" rx="1.5" stroke="#2a2a2a" fill="none" stroke-width="1.3" stroke-width="1.4"/>
<path d="M0.7 5H14.7M4.6 0.5V2.5M10.8 0.5V2.5" stroke="#2a2a2a" fill="none" stroke-width="1.3" stroke-width="1.2"/></svg>
<svg class="b" style="left:408.70px;top:566.50px" width="16" height="15" viewBox="0 0 16 15"><path d="M0.5 2.5H14.5" stroke="#333" fill="none" stroke-width="1.3"/><path d="M2.5 6H12.5" stroke="#4ec3ee" fill="none" stroke-width="1.3" stroke-width="1.5"/>
<path d="M4.5 9.5H10.5" stroke="#333" fill="none" stroke-width="1.3"/><path d="M6.5 13H8.5" stroke="#4ec3ee" fill="none" stroke-width="1.3" stroke-width="1.4"/></svg>
<svg class="b" style="left:437.80px;top:566.50px" width="16" height="15" viewBox="0 0 16 15"><path d="M6.3 0.8H8.7L9.1 2.6L10.6 3.4L12.3 2.7L13.5 4.8L12.1 6V9L13.5 10.2L12.3 12.3L10.6 11.6L9.1 12.4L8.7 14.2H6.3L5.9 12.4L4.4 11.6L2.7 12.3L1.5 10.2L2.9 9V6L1.5 4.8L2.7 2.7L4.4 3.4L5.9 2.6Z" stroke="#333" fill="none" stroke-width="1.3" stroke-linejoin="round"/>
<circle cx="7.5" cy="7.5" r="2.2" stroke="#4ec3ee" fill="none" stroke-width="1.3" stroke-width="1.4"/></svg>
<svg class="b" style="left:467.30px;top:566.50px" width="16" height="15" viewBox="0 0 16 15"><path d="M0.8 1.5L1.8 0.8V4.2M0.6 6.3C1 5.3 2.8 5.5 2.5 6.7L0.6 9H2.8M0.6 11.2H2.6L1.5 12.3C3 12.4 3 14.5 0.6 14.2" stroke="#4ec3ee" fill="none" stroke-width="1.3" stroke-width="0.9"/>
<path d="M5.5 2.5H13.5M5.5 7.5H13.5M5.5 12.5H13.5" stroke="#333" fill="none" stroke-width="1.3" stroke-width="1.5"/></svg>
<svg class="b" style="left:492.00px;top:566.50px" width="16" height="15" viewBox="0 0 16 15"><path d="M0.5 1.5H13.5M0.5 5H13.5M0.5 8.5H8M0.5 12H6" stroke="#333" fill="none" stroke-width="1.3" stroke-width="1.4"/>
<path d="M11 8V14M8 11H14" stroke="#4ec3ee" fill="none" stroke-width="1.3"/></svg>
<svg class="b" style="left:521.00px;top:566.50px" width="16" height="15" viewBox="0 0 16 15"><path d="M7 3H1.5V14H12.5V8.5" stroke="#333" fill="none" stroke-width="1.3" stroke-width="1.5"/>
<path d="M7 8.5L14 1.5M9.5 1H14.5V6" stroke="#4ec3ee" fill="none" stroke-width="1.3" stroke-width="1.4"/></svg>
<svg class="b" style="left:548.50px;top:566.50px" width="16" height="15" viewBox="0 0 16 15"><path d="M2.5 11.5H1V2.5H12" stroke="#333" fill="none" stroke-width="1.3" stroke-width="1.3"/>
<path d="M10 0.5L12 2.5L10 4.5" stroke="#333" fill="none" stroke-width="1.3" stroke-width="1.3"/>
<path d="M13 4.5H14.5V12.5H4" stroke="#4ec3ee" fill="none" stroke-width="1.3" stroke-width="1.3"/>
<path d="M6 10.5L4 12.5L6 14.5" stroke="#4ec3ee" fill="none" stroke-width="1.3" stroke-width="1.3"/></svg>
<svg class="b" style="left:1219.80px;top:567.00px" width="11.6" height="11.6" viewBox="0 0 12 12"><rect x="0" y="0" width="12" height="12" rx="2.2" fill="#0b7bff"/><path d="M2.6 6.3L5 8.6L9.6 3.3" fill="none" stroke="#fff" stroke-width="1.7" stroke-linecap="round" stroke-linejoin="round"/></svg>
<div class="t" style="left:1234.00px;top:567.00px;line-height:16px;font-size:10.3px;color:#1b1b1b;">Открыт (F6)</div>
<div class="b" style="left:1294.00px;top:564.40px;width:90.50px;height:19.40px;background:#fff;border:1px solid #c8c8c8;border-radius:3px;"></div>
<div class="t" style="left:1324.50px;top:565.70px;line-height:16px;font-size:10.7px;color:#1b1b1b;">Добавить</div>
<svg class="b" style="left:1308px;top:569px" width="10" height="10" viewBox="0 0 10 10"><path d="M5 0.5V9.5M0.5 5H9.5" stroke="#333" stroke-width="1.1"/></svg>
<div class="b" style="left:1389.00px;top:564.40px;width:115.50px;height:19.40px;background:#fff;border:1px solid #c8c8c8;border-radius:3px;"></div>
<div class="t" style="left:1418.50px;top:565.70px;line-height:16px;font-size:10.7px;color:#1b1b1b;">Редактировать</div>
<svg class="b" style="left:1401px;top:567px" width="12" height="14" viewBox="0 0 12 14"><path d="M1.5 10L2 7.5L8 1.5L10.5 4L4.5 10Z" fill="none" stroke="#333" stroke-width="1.1" stroke-linejoin="round"/><path d="M0.5 12.5H11" stroke="#4ec3ee" stroke-width="1.3"/></svg>
<div class="b" style="left:1509.00px;top:564.40px;width:81.30px;height:19.40px;background:#fff;border:1px solid #c8c8c8;border-radius:3px;"></div>
<div class="t" style="left:1538.50px;top:565.70px;line-height:16px;font-size:10.7px;color:#1b1b1b;">Удалить</div>
<svg class="b" style="left:1523px;top:569px" width="10" height="10" viewBox="0 0 10 10"><path d="M0.5 5H9.5" stroke="#333" stroke-width="1.3"/></svg>
<div class="b" style="left:323.00px;top:607.00px;width:1270.00px;height:1.20px;background:#cfcfcf;"></div>
<div class="b" style="left:326.00px;top:588.40px;width:93.00px;height:19.00px;background:#d5e4e8;border:1px solid #cdd3d6;border-bottom:none;border-top-left-radius:3px;border-top-right-radius:3px;"></div>
<div class="b" style="left:422.40px;top:588.40px;width:106.00px;height:19.00px;background:#f2f2f2;border:1px solid #cfcfcf;border-bottom:none;border-top-left-radius:3px;border-top-right-radius:3px;"></div>
<div class="b" style="left:532.60px;top:588.40px;width:65.00px;height:19.00px;background:#f2f2f2;border:1px solid #cfcfcf;border-bottom:none;border-top-left-radius:3px;border-top-right-radius:3px;"></div>
<div class="t" style="left:335.70px;top:591.20px;line-height:16px;font-size:10.7px;color:#1b1b1b;">Спецификация</div>
<div class="t" style="left:432.30px;top:591.20px;line-height:16px;font-size:10.7px;color:#1b1b1b;">Печатные формы</div>
<div class="t" style="left:541.60px;top:591.20px;line-height:16px;font-size:10.7px;color:#1b1b1b;">Действия</div>
<div class="b" style="left:325.00px;top:612.00px;width:1265.50px;height:283.00px;background:#fff;border:1px solid #c6c6c6;border-radius:3px;"></div>
<div class="b" style="left:326.00px;top:613.00px;width:1263.50px;height:49.40px;background:#f2f2f2;"></div>
<div class="b" style="left:326px;top:613px;width:1263.5px;height:281px;overflow:hidden;">
<div class="t" style="left:18.50px;top:9.00px;line-height:16px;font-size:10.7px;color:#1b1b1b;">Номер</div>
<div class="t" style="left:18.50px;top:24.00px;line-height:16px;font-size:10.7px;color:#1b1b1b;">строки</div>
<div class="b" style="left:53.70px;top:0.00px;width:1.00px;height:49.40px;background:#dcdcdc;"></div>
<div class="t" style="left:34.20px;top:16.50px;line-height:16px;font-size:10.7px;color:#1b1b1b;width:138.00px;text-align:center;overflow:hidden;">Штрихкод</div>
<div class="b" style="left:151.70px;top:0.00px;width:1.00px;height:49.40px;background:#dcdcdc;"></div>
<div class="t" style="left:132.20px;top:16.50px;line-height:16px;font-size:10.7px;color:#1b1b1b;width:229.20px;text-align:center;overflow:hidden;">Наименование</div>
<div class="b" style="left:340.90px;top:0.00px;width:1.00px;height:49.40px;background:#dcdcdc;"></div>
<div class="t" style="left:321.40px;top:16.50px;line-height:16px;font-size:10.7px;color:#1b1b1b;width:168.10px;text-align:center;overflow:hidden;">Партия</div>
<div class="b" style="left:469.00px;top:0.00px;width:1.00px;height:49.40px;background:#dcdcdc;"></div>
<div class="t" style="left:449.50px;top:1.50px;line-height:16px;font-size:10.7px;color:#1b1b1b;width:64.10px;text-align:center;overflow:hidden;">Ед.</div>
<div class="t" style="left:449.50px;top:16.50px;line-height:16px;font-size:10.7px;color:#1b1b1b;width:64.10px;text-align:center;overflow:hidden;">изм</div>
<div class="t" style="left:449.50px;top:31.50px;line-height:16px;font-size:10.7px;color:#1b1b1b;width:64.10px;text-align:center;overflow:hidden;">.</div>
<div class="b" style="left:493.10px;top:0.00px;width:1.00px;height:49.40px;background:#dcdcdc;"></div>
<div class="t" style="left:473.60px;top:16.50px;line-height:16px;font-size:10.7px;color:#1b1b1b;width:108.20px;text-align:center;overflow:hidden;">Вид цен</div>
<div class="b" style="left:561.30px;top:0.00px;width:1.00px;height:49.40px;background:#dcdcdc;"></div>
<div class="t" style="left:541.80px;top:1.50px;line-height:16px;font-size:10.7px;color:#1b1b1b;width:88.60px;text-align:center;overflow:hidden;">Цена</div>
<div class="t" style="left:541.80px;top:16.50px;line-height:16px;font-size:10.7px;color:#1b1b1b;width:88.60px;text-align:center;overflow:hidden;">поставщ</div>
<div class="t" style="left:541.80px;top:31.50px;line-height:16px;font-size:10.7px;color:#1b1b1b;width:88.60px;text-align:center;overflow:hidden;">ика</div>
<div class="b" style="left:609.90px;top:0.00px;width:1.00px;height:49.40px;background:#dcdcdc;"></div>
<div class="t" style="left:590.40px;top:9.00px;line-height:16px;font-size:10.7px;color:#1b1b1b;width:94.90px;text-align:center;overflow:hidden;">Надбавка,</div>
<div class="t" style="left:590.40px;top:24.00px;line-height:16px;font-size:10.7px;color:#1b1b1b;width:94.90px;text-align:center;overflow:hidden;">%</div>
<div class="b" style="left:664.80px;top:0.00px;width:1.00px;height:49.40px;background:#dcdcdc;"></div>
<div class="t" style="left:645.30px;top:1.50px;line-height:16px;font-size:10.7px;color:#1b1b1b;width:71.30px;text-align:center;overflow:hidden;">НДС,</div>
<div class="t" style="left:645.30px;top:16.50px;line-height:16px;font-size:10.7px;color:#1b1b1b;width:71.30px;text-align:center;overflow:hidden;">номе</div>
<div class="t" style="left:645.30px;top:31.50px;line-height:16px;font-size:10.7px;color:#1b1b1b;width:71.30px;text-align:center;overflow:hidden;">р</div>
<div class="b" style="left:696.10px;top:0.00px;width:1.00px;height:49.40px;background:#dcdcdc;"></div>
<div class="t" style="left:676.60px;top:16.50px;line-height:16px;font-size:10.7px;color:#1b1b1b;width:88.90px;text-align:center;overflow:hidden;">НДС, %</div>
<div class="b" style="left:745.00px;top:0.00px;width:1.00px;height:49.40px;background:#dcdcdc;"></div>
<div class="t" style="left:725.50px;top:1.50px;line-height:16px;font-size:10.7px;color:#1b1b1b;width:87.90px;text-align:center;overflow:hidden;">Цена</div>
<div class="t" style="left:725.50px;top:16.50px;line-height:16px;font-size:10.7px;color:#1b1b1b;width:87.90px;text-align:center;overflow:hidden;">розничн</div>
<div class="t" style="left:725.50px;top:31.50px;line-height:16px;font-size:10.7px;color:#1b1b1b;width:87.90px;text-align:center;overflow:hidden;">ая</div>
<div class="b" style="left:792.90px;top:0.00px;width:1.00px;height:49.40px;background:#dcdcdc;"></div>
<div class="t" style="left:773.40px;top:16.50px;line-height:16px;font-size:10.7px;color:#1b1b1b;width:89.10px;text-align:center;overflow:hidden;">Кол-во</div>
<div class="b" style="left:842.00px;top:0.00px;width:1.00px;height:49.40px;background:#dcdcdc;"></div>
<div class="t" style="left:822.50px;top:1.50px;line-height:16px;font-size:10.7px;color:#1b1b1b;width:101.40px;text-align:center;overflow:hidden;">Сумма</div>
<div class="t" style="left:822.50px;top:16.50px;line-height:16px;font-size:10.7px;color:#1b1b1b;width:101.40px;text-align:center;overflow:hidden;">поставщик</div>
<div class="t" style="left:822.50px;top:31.50px;line-height:16px;font-size:10.7px;color:#1b1b1b;width:101.40px;text-align:center;overflow:hidden;">а</div>
<div class="b" style="left:903.40px;top:0.00px;width:1.00px;height:49.40px;background:#dcdcdc;"></div>
<div class="t" style="left:883.90px;top:9.00px;line-height:16px;font-size:10.7px;color:#1b1b1b;width:95.60px;text-align:center;overflow:hidden;">Сумма</div>
<div class="t" style="left:883.90px;top:24.00px;line-height:16px;font-size:10.7px;color:#1b1b1b;width:95.60px;text-align:center;overflow:hidden;">надбавки</div>
<div class="b" style="left:959.00px;top:0.00px;width:1.00px;height:49.40px;background:#dcdcdc;"></div>
<div class="t" style="left:939.50px;top:0.70px;line-height:16px;font-size:10.7px;color:#1b1b1b;width:94.90px;text-align:center;overflow:hidden;">Сумма</div>
<div class="t" style="left:939.50px;top:15.70px;line-height:16px;font-size:10.7px;color:#1b1b1b;width:94.90px;text-align:center;overflow:hidden;">НДС</div>
<div class="t" style="left:939.50px;top:30.70px;line-height:16px;font-size:10.7px;color:#1b1b1b;width:94.90px;text-align:center;overflow:hidden;">рознична</div>
<div class="b" style="left:1013.90px;top:0.00px;width:1.00px;height:49.40px;background:#dcdcdc;"></div>
<div class="t" style="left:994.40px;top:9.00px;line-height:16px;font-size:10.7px;color:#1b1b1b;width:100.80px;text-align:center;overflow:hidden;">Сумма</div>
<div class="t" style="left:994.40px;top:24.00px;line-height:16px;font-size:10.7px;color:#1b1b1b;width:100.80px;text-align:center;overflow:hidden;">розничная</div>
<div class="b" style="left:1074.70px;top:0.00px;width:1.00px;height:49.40px;background:#dcdcdc;"></div>
<div class="t" style="left:1055.20px;top:16.50px;line-height:16px;font-size:10.7px;color:#1b1b1b;width:228.30px;text-align:center;overflow:hidden;">Строка накладной</div>
<svg class="b" style="left:1px;top:19px" width="11" height="11" viewBox="0 0 11 11"><circle cx="5.5" cy="5.5" r="4.6" fill="none" stroke="#4ec3ee" stroke-width="1.2"/><path d="M3.3 6.5L5.5 4.3L7.7 6.5" fill="none" stroke="#333" stroke-width="1.1"/></svg>
<div class="b" style="left:0.00px;top:48.90px;width:1263.50px;height:1.00px;background:#dcdcdc;"></div>
<div class="b" style="left:0.00px;top:49.40px;width:1263.50px;height:19.10px;background:#d3e4e9;"></div>
<div class="b" style="left:610.90px;top:49.40px;width:53.90px;height:18.60px;background:#c4e3e6;"></div>
<div class="b" style="left:697.10px;top:49.40px;width:47.90px;height:18.60px;background:#c4e3e6;"></div>
<div class="b" style="left:746.00px;top:49.40px;width:46.90px;height:18.60px;background:#c4e3e6;"></div>
<div class="b" style="left:904.40px;top:49.40px;width:54.60px;height:18.60px;background:#c4e3e6;"></div>
<div class="b" style="left:960.00px;top:49.40px;width:53.90px;height:18.60px;background:#c4e3e6;"></div>
<div class="b" style="left:1014.90px;top:49.40px;width:59.80px;height:18.60px;background:#c4e3e6;"></div>
<div class="b" style="left:0.00px;top:68.00px;width:1263.50px;height:1.00px;background:#e3e3e3;"></div>
<div class="t" style="left:0.00px;top:51.40px;line-height:16px;font-size:10.6px;color:#1b1b1b;width:50.90px;text-align:right;overflow:hidden;">1</div>
<div class="t" style="left:57.50px;top:51.40px;line-height:16px;font-size:10.6px;color:#1b1b1b;width:94.20px;text-align:left;overflow:hidden;">4600605021835</div>
<div class="t" style="left:155.50px;top:51.40px;line-height:16px;font-size:10.6px;color:#1b1b1b;width:185.40px;text-align:left;overflow:hidden;letter-spacing:-0.18px;">БИОЙОГ.АКТИВИА 2.7% ВИШНЯ 170Г</div>
<div class="t" style="left:344.70px;top:51.40px;line-height:16px;font-size:10.6px;color:#1b1b1b;width:124.30px;text-align:left;overflow:hidden;">2024-02-28/ ЭЭ1004113/ </div>
<div class="t" style="left:472.80px;top:51.40px;line-height:16px;font-size:10.6px;color:#1b1b1b;width:20.30px;text-align:left;overflow:hidden;">пор.</div>
<div class="t" style="left:561.80px;top:51.40px;line-height:16px;font-size:10.6px;color:#1b1b1b;width:45.30px;text-align:right;overflow:hidden;">0,99</div>
<div class="t" style="left:610.40px;top:51.40px;line-height:16px;font-size:10.6px;color:#1b1b1b;width:51.60px;text-align:right;overflow:hidden;">36,82</div>
<div class="t" style="left:665.30px;top:51.40px;line-height:16px;font-size:10.6px;color:#1b1b1b;width:28.00px;text-align:right;overflow:hidden;">4</div>
<div class="t" style="left:696.60px;top:51.40px;line-height:16px;font-size:10.6px;color:#1b1b1b;width:45.60px;text-align:right;overflow:hidden;">10</div>
<div class="t" style="left:745.50px;top:51.40px;line-height:16px;font-size:10.6px;color:#1b1b1b;width:44.60px;text-align:right;overflow:hidden;">1,49</div>
<div class="t" style="left:793.40px;top:51.40px;line-height:16px;font-size:10.6px;color:#1b1b1b;width:45.80px;text-align:right;overflow:hidden;">1</div>
<div class="t" style="left:842.50px;top:51.40px;line-height:16px;font-size:10.6px;color:#1b1b1b;width:58.10px;text-align:right;overflow:hidden;">0,99</div>
<div class="t" style="left:903.90px;top:51.40px;line-height:16px;font-size:10.6px;color:#1b1b1b;width:52.30px;text-align:right;overflow:hidden;">0,36</div>
<div class="t" style="left:959.50px;top:51.40px;line-height:16px;font-size:10.6px;color:#1b1b1b;width:51.60px;text-align:right;overflow:hidden;">0,14</div>
<div class="t" style="left:1014.40px;top:51.40px;line-height:16px;font-size:10.6px;color:#1b1b1b;width:57.50px;text-align:right;overflow:hidden;">1,49</div>
<div class="b" style="left:467.50px;top:62.50px;width:1.00px;height:3.00px;background:#e2a640;"></div>
<div class="b" style="left:610.90px;top:69.00px;width:53.90px;height:19.20px;background:#e0fdfd;"></div>
<div class="b" style="left:697.10px;top:69.00px;width:47.90px;height:19.20px;background:#e0fdfd;"></div>
<div class="b" style="left:746.00px;top:69.00px;width:46.90px;height:19.20px;background:#e0fdfd;"></div>
<div class="b" style="left:904.40px;top:69.00px;width:54.60px;height:19.20px;background:#e0fdfd;"></div>
<div class="b" style="left:960.00px;top:69.00px;width:53.90px;height:19.20px;background:#e0fdfd;"></div>
<div class="b" style="left:1014.90px;top:69.00px;width:59.80px;height:19.20px;background:#e0fdfd;"></div>
<div class="b" style="left:0.00px;top:87.70px;width:1263.50px;height:1.00px;background:#e3e3e3;"></div>
<div class="t" style="left:0.00px;top:71.40px;line-height:16px;font-size:10.6px;color:#1b1b1b;width:50.90px;text-align:right;overflow:hidden;">2</div>
<div class="t" style="left:57.50px;top:71.40px;line-height:16px;font-size:10.6px;color:#1b1b1b;width:94.20px;text-align:left;overflow:hidden;">4600605021804</div>
<div class="t" style="left:155.50px;top:71.40px;line-height:16px;font-size:10.6px;color:#1b1b1b;width:185.40px;text-align:left;overflow:hidden;letter-spacing:-0.18px;">БИОЙОГ.АКТИВИА 2.7% ЧЕРНИКА 170Г</div>
<div class="t" style="left:344.70px;top:71.40px;line-height:16px;font-size:10.6px;color:#1b1b1b;width:124.30px;text-align:left;overflow:hidden;">2024-02-15/ ЭЭ1000902/ </div>
<div class="t" style="left:472.80px;top:71.40px;line-height:16px;font-size:10.6px;color:#1b1b1b;width:20.30px;text-align:left;overflow:hidden;">пор.</div>
<div class="t" style="left:561.80px;top:71.40px;line-height:16px;font-size:10.6px;color:#1b1b1b;width:45.30px;text-align:right;overflow:hidden;">0,99</div>
<div class="t" style="left:610.40px;top:71.40px;line-height:16px;font-size:10.6px;color:#1b1b1b;width:51.60px;text-align:right;overflow:hidden;">36,82</div>
<div class="t" style="left:665.30px;top:71.40px;line-height:16px;font-size:10.6px;color:#1b1b1b;width:28.00px;text-align:right;overflow:hidden;">4</div>
<div class="t" style="left:696.60px;top:71.40px;line-height:16px;font-size:10.6px;color:#1b1b1b;width:45.60px;text-align:right;overflow:hidden;">10</div>
<div class="t" style="left:745.50px;top:71.40px;line-height:16px;font-size:10.6px;color:#1b1b1b;width:44.60px;text-align:right;overflow:hidden;">1,49</div>
<div class="t" style="left:793.40px;top:71.40px;line-height:16px;font-size:10.6px;color:#1b1b1b;width:45.80px;text-align:right;overflow:hidden;">1</div>
<div class="t" style="left:842.50px;top:71.40px;line-height:16px;font-size:10.6px;color:#1b1b1b;width:58.10px;text-align:right;overflow:hidden;">0,99</div>
<div class="t" style="left:903.90px;top:71.40px;line-height:16px;font-size:10.6px;color:#1b1b1b;width:52.30px;text-align:right;overflow:hidden;">0,36</div>
<div class="t" style="left:959.50px;top:71.40px;line-height:16px;font-size:10.6px;color:#1b1b1b;width:51.60px;text-align:right;overflow:hidden;">0,14</div>
<div class="t" style="left:1014.40px;top:71.40px;line-height:16px;font-size:10.6px;color:#1b1b1b;width:57.50px;text-align:right;overflow:hidden;">1,49</div>
<div class="b" style="left:467.50px;top:82.20px;width:1.00px;height:3.00px;background:#e2a640;"></div>
<div class="b" style="left:610.90px;top:88.70px;width:53.90px;height:18.90px;background:#e0fdfd;"></div>
<div class="b" style="left:697.10px;top:88.70px;width:47.90px;height:18.90px;background:#e0fdfd;"></div>
<div class="b" style="left:746.00px;top:88.70px;width:46.90px;height:18.90px;background:#e0fdfd;"></div>
<div class="b" style="left:904.40px;top:88.70px;width:54.60px;height:18.90px;background:#e0fdfd;"></div>
<div class="b" style="left:960.00px;top:88.70px;width:53.90px;height:18.90px;background:#e0fdfd;"></div>
<div class="b" style="left:1014.90px;top:88.70px;width:59.80px;height:18.90px;background:#e0fdfd;"></div>
<div class="b" style="left:0.00px;top:107.10px;width:1263.50px;height:1.00px;background:#e3e3e3;"></div>
<div class="t" style="left:0.00px;top:91.40px;line-height:16px;font-size:10.6px;color:#1b1b1b;width:50.90px;text-align:right;overflow:hidden;">3</div>
<div class="t" style="left:57.50px;top:91.40px;line-height:16px;font-size:10.6px;color:#1b1b1b;width:94.20px;text-align:left;overflow:hidden;">4600605021804</div>
<div class="t" style="left:155.50px;top:91.40px;line-height:16px;font-size:10.6px;color:#1b1b1b;width:185.40px;text-align:left;overflow:hidden;letter-spacing:-0.18px;">БИОЙОГ.АКТИВИА 2.7% ЧЕРНИКА 170Г</div>
<div class="t" style="left:344.70px;top:91.40px;line-height:16px;font-size:10.6px;color:#1b1b1b;width:124.30px;text-align:left;overflow:hidden;">2024-03-02/ ЭЭ1024459/ </div>
<div class="t" style="left:472.80px;top:91.40px;line-height:16px;font-size:10.6px;color:#1b1b1b;width:20.30px;text-align:left;overflow:hidden;">пор.</div>
<div class="t" style="left:561.80px;top:91.40px;line-height:16px;font-size:10.6px;color:#1b1b1b;width:45.30px;text-align:right;overflow:hidden;">0,99</div>
<div class="t" style="left:610.40px;top:91.40px;line-height:16px;font-size:10.6px;color:#1b1b1b;width:51.60px;text-align:right;overflow:hidden;">36,82</div>
<div class="t" style="left:665.30px;top:91.40px;line-height:16px;font-size:10.6px;color:#1b1b1b;width:28.00px;text-align:right;overflow:hidden;">4</div>
<div class="t" style="left:696.60px;top:91.40px;line-height:16px;font-size:10.6px;color:#1b1b1b;width:45.60px;text-align:right;overflow:hidden;">10</div>
<div class="t" style="left:745.50px;top:91.40px;line-height:16px;font-size:10.6px;color:#1b1b1b;width:44.60px;text-align:right;overflow:hidden;">1,49</div>
<div class="t" style="left:793.40px;top:91.40px;line-height:16px;font-size:10.6px;color:#1b1b1b;width:45.80px;text-align:right;overflow:hidden;">1</div>
<div class="t" style="left:842.50px;top:91.40px;line-height:16px;font-size:10.6px;color:#1b1b1b;width:58.10px;text-align:right;overflow:hidden;">0,99</div>
<div class="t" style="left:903.90px;top:91.40px;line-height:16px;font-size:10.6px;color:#1b1b1b;width:52.30px;text-align:right;overflow:hidden;">0,36</div>
<div class="t" style="left:959.50px;top:91.40px;line-height:16px;font-size:10.6px;color:#1b1b1b;width:51.60px;text-align:right;overflow:hidden;">0,14</div>
<div class="t" style="left:1014.40px;top:91.40px;line-height:16px;font-size:10.6px;color:#1b1b1b;width:57.50px;text-align:right;overflow:hidden;">1,49</div>
<div class="b" style="left:467.50px;top:101.60px;width:1.00px;height:3.00px;background:#e2a640;"></div>
<div class="b" style="left:53.70px;top:49.40px;width:1.00px;height:58.30px;background:#e3e3e3;"></div>
<div class="b" style="left:151.70px;top:49.40px;width:1.00px;height:58.30px;background:#e3e3e3;"></div>
<div class="b" style="left:340.90px;top:49.40px;width:1.00px;height:58.30px;background:#e3e3e3;"></div>
<div class="b" style="left:469.00px;top:49.40px;width:1.00px;height:58.30px;background:#e3e3e3;"></div>
<div class="b" style="left:493.10px;top:49.40px;width:1.00px;height:58.30px;background:#e3e3e3;"></div>
<div class="b" style="left:561.30px;top:49.40px;width:1.00px;height:58.30px;background:#e3e3e3;"></div>
<div class="b" style="left:609.90px;top:49.40px;width:1.00px;height:58.30px;background:#e3e3e3;"></div>
<div class="b" style="left:664.80px;top:49.40px;width:1.00px;height:58.30px;background:#e3e3e3;"></div>
<div class="b" style="left:696.10px;top:49.40px;width:1.00px;height:58.30px;background:#e3e3e3;"></div>
<div class="b" style="left:745.00px;top:49.40px;width:1.00px;height:58.30px;background:#e3e3e3;"></div>
<div class="b" style="left:792.90px;top:49.40px;width:1.00px;height:58.30px;background:#e3e3e3;"></div>
<div class="b" style="left:842.00px;top:49.40px;width:1.00px;height:58.30px;background:#e3e3e3;"></div>
<div class="b" style="left:903.40px;top:49.40px;width:1.00px;height:58.30px;background:#e3e3e3;"></div>
<div class="b" style="left:959.00px;top:49.40px;width:1.00px;height:58.30px;background:#e3e3e3;"></div>
<div class="b" style="left:1013.90px;top:49.40px;width:1.00px;height:58.30px;background:#e3e3e3;"></div>
<div class="b" style="left:1074.70px;top:49.40px;width:1.00px;height:58.30px;background:#e3e3e3;"></div>
</div>
<div class="b" style="left:325.00px;top:897.20px;width:25.00px;height:19.50px;background:#d5e4e8;border-radius:4px;"></div>
<svg class="b" style="left:329.50px;top:899.70px" width="16" height="15" viewBox="0 0 16 15"><circle cx="2" cy="3" r="1.3" stroke="#4ec3ee" fill="none" stroke-width="1.3"/><circle cx="2" cy="7.5" r="1.3" stroke="#4ec3ee" fill="none" stroke-width="1.3"/><circle cx="2" cy="12" r="1.3" stroke="#4ec3ee" fill="none" stroke-width="1.3"/>
<path d="M6 3H14M6 7.5H14M6 12H14" stroke="#333" fill="none" stroke-width="1.3" stroke-width="1.5"/></svg>
<svg class="b" style="left:355.00px;top:899.70px" width="16" height="15" viewBox="0 0 16 15"><rect x="0.7" y="0.7" width="14" height="13" rx="1.2" fill="#fff" stroke="none"/>
<path d="M4.4 1V14M7.75 1V14M11.1 1V14M1 4H14.5M1 7.2H14.5M1 10.4H14.5" stroke="#4ec3ee" fill="none" stroke-width="1.3" stroke-width="1.1"/>
<rect x="0.7" y="0.7" width="14" height="13" rx="1.2" stroke="#2a2a2a" fill="none" stroke-width="1.3" stroke-width="1.4"/></svg>
<svg class="b" style="left:383.80px;top:899.70px" width="16" height="15" viewBox="0 0 16 15"><path d="M0.5 2.5H14.5" stroke="#333" fill="none" stroke-width="1.3"/><path d="M2.5 6H12.5" stroke="#4ec3ee" fill="none" stroke-width="1.3" stroke-width="1.5"/>
<path d="M4.5 9.5H10.5" stroke="#333" fill="none" stroke-width="1.3"/><path d="M6.5 13H8.5" stroke="#4ec3ee" fill="none" stroke-width="1.3" stroke-width="1.4"/></svg>
<svg class="b" style="left:412.60px;top:899.70px" width="16" height="15" viewBox="0 0 16 15"><path d="M6.3 0.8H8.7L9.1 2.6L10.6 3.4L12.3 2.7L13.5 4.8L12.1 6V9L13.5 10.2L12.3 12.3L10.6 11.6L9.1 12.4L8.7 14.2H6.3L5.9 12.4L4.4 11.6L2.7 12.3L1.5 10.2L2.9 9V6L1.5 4.8L2.7 2.7L4.4 3.4L5.9 2.6Z" stroke="#333" fill="none" stroke-width="1.3" stroke-linejoin="round"/>
<circle cx="7.5" cy="7.5" r="2.2" stroke="#4ec3ee" fill="none" stroke-width="1.3" stroke-width="1.4"/></svg>
<svg class="b" style="left:441.90px;top:899.70px" width="16" height="15" viewBox="0 0 16 15"><path d="M0.8 1.5L1.8 0.8V4.2M0.6 6.3C1 5.3 2.8 5.5 2.5 6.7L0.6 9H2.8M0.6 11.2H2.6L1.5 12.3C3 12.4 3 14.5 0.6 14.2" stroke="#4ec3ee" fill="none" stroke-width="1.3" stroke-width="0.9"/>
<path d="M5.5 2.5H13.5M5.5 7.5H13.5M5.5 12.5H13.5" stroke="#333" fill="none" stroke-width="1.3" stroke-width="1.5"/></svg>
<svg class="b" style="left:466.70px;top:899.70px" width="16" height="15" viewBox="0 0 16 15"><path d="M0.5 1.5H13.5M0.5 5H13.5M0.5 8.5H8M0.5 12H6" stroke="#333" fill="none" stroke-width="1.3" stroke-width="1.4"/>
<path d="M11 8V14M8 11H14" stroke="#4ec3ee" fill="none" stroke-width="1.3"/></svg>
<svg class="b" style="left:494.70px;top:899.70px" width="16" height="15" viewBox="0 0 16 15"><path d="M7 3H1.5V14H12.5V8.5" stroke="#333" fill="none" stroke-width="1.3" stroke-width="1.5"/>
<path d="M7 8.5L14 1.5M9.5 1H14.5V6" stroke="#4ec3ee" fill="none" stroke-width="1.3" stroke-width="1.4"/></svg>
<svg class="b" style="left:523.50px;top:899.70px" width="16" height="15" viewBox="0 0 16 15"><path d="M2.5 11.5H1V2.5H12" stroke="#333" fill="none" stroke-width="1.3" stroke-width="1.3"/>
<path d="M10 0.5L12 2.5L10 4.5" stroke="#333" fill="none" stroke-width="1.3" stroke-width="1.3"/>
<path d="M13 4.5H14.5V12.5H4" stroke="#4ec3ee" fill="none" stroke-width="1.3" stroke-width="1.3"/>
<path d="M6 10.5L4 12.5L6 14.5" stroke="#4ec3ee" fill="none" stroke-width="1.3" stroke-width="1.3"/></svg>
<div class="b" style="left:323.00px;top:918.00px;width:1270.00px;height:1.20px;background:#cfcfcf;"></div>
<svg class="b" style="left:325.00px;top:927.30px" width="12" height="12" viewBox="0 0 12 12"><rect x="0.65" y="0.65" width="10.7" height="10.7" rx="2" fill="#fff" stroke="#858585" stroke-width="1.3"/></svg>
<div class="t" style="left:340.00px;top:926.20px;line-height:16px;font-size:10.7px;color:#1b1b1b;">Включить корректировку на форме</div>
<div class="b" style="left:1210.30px;top:923.20px;width:37.30px;height:19.40px;background:#fff;border:1px solid #c8c8c8;border-radius:3px;"></div>
<svg class="b" style="left:1222.5px;top:926px" width="13" height="13" viewBox="0 0 13 13"><path d="M2 6A4.5 4.5 0 0 1 10.3 3.5" fill="none" stroke="#222" stroke-width="1.5"/><path d="M11.5 1V4.8H7.7Z" fill="#222"/><path d="M11 7A4.5 4.5 0 0 1 2.7 9.5" fill="none" stroke="#4ec3ee" stroke-width="1.5"/><path d="M1.5 12V8.2H5.3Z" fill="#4ec3ee"/></svg>
<div class="b" style="left:1252.30px;top:923.20px;width:94.10px;height:19.40px;background:#fff;border:1px solid #c8c8c8;border-radius:3px;"></div>
<div class="t" style="left:1282.00px;top:926.00px;line-height:16px;font-size:10.7px;color:#7b7b7b;">Сохранить</div>
<svg class="b" style="left:1264.5px;top:927.5px" width="12" height="12" viewBox="0 0 12 12"><path d="M1 2A1 1 0 0 1 2 1H8L11 4V10A1 1 0 0 1 10 11H2A1 1 0 0 1 1 10Z" fill="none" stroke="#333" stroke-width="1.3"/><path d="M3 8H9" stroke="#4ec3ee" stroke-width="1.6"/></svg>
<div class="b" style="left:1351.30px;top:923.20px;width:90.10px;height:19.40px;background:#fff;border:1px solid #c8c8c8;border-radius:3px;"></div>
<div class="t" style="left:1381.20px;top:926.00px;line-height:16px;font-size:10.7px;color:#7b7b7b;">Отменить</div>
<svg class="b" style="left:1364.5px;top:926.5px" width="11" height="13" viewBox="0 0 11 13"><path d="M0.5 2.5H10.5M3.5 2.5V1H7.5V2.5" fill="none" stroke="#4ec3ee" stroke-width="1.2"/><path d="M2 4V11.5H9V4M4.5 5V10M6.5 5V10" fill="none" stroke="#333" stroke-width="1.3"/></svg>
<div class="b" style="left:1446.20px;top:923.20px;width:57.20px;height:19.40px;background:#fff;border:1px solid #c8c8c8;border-radius:3px;"></div>
<div class="t" style="left:1475.90px;top:926.00px;line-height:16px;font-size:10.7px;color:#1b1b1b;">OK</div>
<svg class="b" style="left:1459.5px;top:928px" width="11" height="10" viewBox="0 0 11 10"><path d="M0.8 5.5L3.8 8.8L10.2 0.8" fill="none" stroke="#333" stroke-width="1.4"/></svg>
<div class="b" style="left:1507.40px;top:923.20px;width:83.20px;height:19.40px;background:#fff;border:1px solid #c8c8c8;border-radius:3px;"></div>
<div class="t" style="left:1537.80px;top:926.00px;line-height:16px;font-size:10.7px;color:#1b1b1b;">Закрыть</div>
<svg class="b" style="left:1522px;top:928.5px" width="9" height="9" viewBox="0 0 9 9"><path d="M0.5 0.5L8.5 8.5M8.5 0.5L0.5 8.5" stroke="#333" stroke-width="1.4"/></svg>
</body></html>
